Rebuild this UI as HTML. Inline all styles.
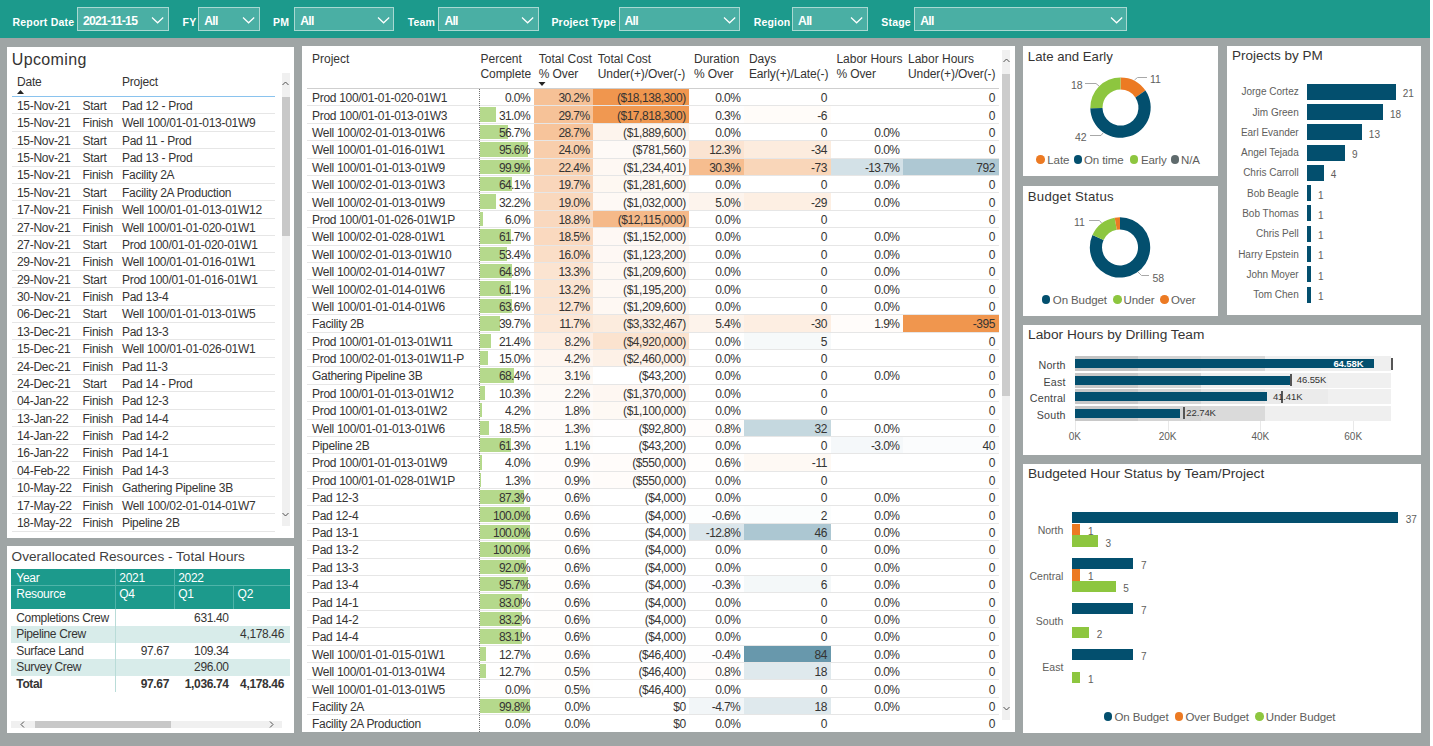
<!DOCTYPE html>
<html><head><meta charset="utf-8"><style>
html,body{margin:0;padding:0;width:1433px;height:746px;overflow:hidden;background:#ffffff;font-family:"Liberation Sans", sans-serif;}
</style></head><body><div style="position:relative;width:1433px;height:746px;overflow:hidden">
<div style="position:absolute;left:0.00px;top:0.00px;width:1430.00px;height:746.00px;background:#9fa5a5"></div>
<div style="position:absolute;left:0.00px;top:0.00px;width:1429.50px;height:38.00px;background:#1c9a8c"></div>
<div style="position:absolute;top:15.50px;font-size:10.5px;line-height:12.0645px;color:#ffffff;font-weight:bold;white-space:nowrap;letter-spacing:0.2px;left:12.50px;">Report Date</div>
<div style="position:absolute;left:77.00px;top:7.40px;width:92.00px;height:23.60px;box-sizing:border-box;border:1.6px solid #a9d9d2;background:#4aafa4"></div>
<div style="position:absolute;top:13.86px;font-size:12.2px;line-height:14.0178px;color:#ffffff;font-weight:bold;white-space:nowrap;letter-spacing:-0.75px;left:83.00px;">2021-11-15</div>
<svg style="position:absolute;left:151.20px;top:16px" width="14" height="9"><polyline points="1,1.5 6.6,6.8 12.2,1.5" fill="none" stroke="#ffffff" stroke-width="1.2"/></svg>
<div style="position:absolute;top:15.50px;font-size:10.5px;line-height:12.0645px;color:#ffffff;font-weight:bold;white-space:nowrap;letter-spacing:0.2px;left:182.60px;">FY</div>
<div style="position:absolute;left:198.20px;top:7.40px;width:61.40px;height:23.60px;box-sizing:border-box;border:1.6px solid #a9d9d2;background:#4aafa4"></div>
<div style="position:absolute;top:13.86px;font-size:12.2px;line-height:14.0178px;color:#ffffff;font-weight:bold;white-space:nowrap;letter-spacing:-0.75px;left:204.20px;">All</div>
<svg style="position:absolute;left:241.80px;top:16px" width="14" height="9"><polyline points="1,1.5 6.6,6.8 12.2,1.5" fill="none" stroke="#ffffff" stroke-width="1.2"/></svg>
<div style="position:absolute;top:15.50px;font-size:10.5px;line-height:12.0645px;color:#ffffff;font-weight:bold;white-space:nowrap;letter-spacing:0.2px;left:273.00px;">PM</div>
<div style="position:absolute;left:294.30px;top:7.40px;width:100.00px;height:23.60px;box-sizing:border-box;border:1.6px solid #a9d9d2;background:#4aafa4"></div>
<div style="position:absolute;top:13.86px;font-size:12.2px;line-height:14.0178px;color:#ffffff;font-weight:bold;white-space:nowrap;letter-spacing:-0.75px;left:300.30px;">All</div>
<svg style="position:absolute;left:376.50px;top:16px" width="14" height="9"><polyline points="1,1.5 6.6,6.8 12.2,1.5" fill="none" stroke="#ffffff" stroke-width="1.2"/></svg>
<div style="position:absolute;top:15.50px;font-size:10.5px;line-height:12.0645px;color:#ffffff;font-weight:bold;white-space:nowrap;letter-spacing:0.2px;left:407.70px;">Team</div>
<div style="position:absolute;left:438.40px;top:7.40px;width:100.20px;height:23.60px;box-sizing:border-box;border:1.6px solid #a9d9d2;background:#4aafa4"></div>
<div style="position:absolute;top:13.86px;font-size:12.2px;line-height:14.0178px;color:#ffffff;font-weight:bold;white-space:nowrap;letter-spacing:-0.75px;left:444.40px;">All</div>
<svg style="position:absolute;left:520.80px;top:16px" width="14" height="9"><polyline points="1,1.5 6.6,6.8 12.2,1.5" fill="none" stroke="#ffffff" stroke-width="1.2"/></svg>
<div style="position:absolute;top:15.50px;font-size:10.5px;line-height:12.0645px;color:#ffffff;font-weight:bold;white-space:nowrap;letter-spacing:0.2px;left:551.40px;">Project Type</div>
<div style="position:absolute;left:618.50px;top:7.40px;width:121.80px;height:23.60px;box-sizing:border-box;border:1.6px solid #a9d9d2;background:#4aafa4"></div>
<div style="position:absolute;top:13.86px;font-size:12.2px;line-height:14.0178px;color:#ffffff;font-weight:bold;white-space:nowrap;letter-spacing:-0.75px;left:624.50px;">All</div>
<svg style="position:absolute;left:722.50px;top:16px" width="14" height="9"><polyline points="1,1.5 6.6,6.8 12.2,1.5" fill="none" stroke="#ffffff" stroke-width="1.2"/></svg>
<div style="position:absolute;top:15.50px;font-size:10.5px;line-height:12.0645px;color:#ffffff;font-weight:bold;white-space:nowrap;letter-spacing:0.2px;left:753.70px;">Region</div>
<div style="position:absolute;left:792.10px;top:7.40px;width:75.80px;height:23.60px;box-sizing:border-box;border:1.6px solid #a9d9d2;background:#4aafa4"></div>
<div style="position:absolute;top:13.86px;font-size:12.2px;line-height:14.0178px;color:#ffffff;font-weight:bold;white-space:nowrap;letter-spacing:-0.75px;left:798.10px;">All</div>
<svg style="position:absolute;left:850.10px;top:16px" width="14" height="9"><polyline points="1,1.5 6.6,6.8 12.2,1.5" fill="none" stroke="#ffffff" stroke-width="1.2"/></svg>
<div style="position:absolute;top:15.50px;font-size:10.5px;line-height:12.0645px;color:#ffffff;font-weight:bold;white-space:nowrap;letter-spacing:0.2px;left:881.30px;">Stage</div>
<div style="position:absolute;left:914.30px;top:7.40px;width:213.00px;height:23.60px;box-sizing:border-box;border:1.6px solid #a9d9d2;background:#4aafa4"></div>
<div style="position:absolute;top:13.86px;font-size:12.2px;line-height:14.0178px;color:#ffffff;font-weight:bold;white-space:nowrap;letter-spacing:-0.75px;left:920.30px;">All</div>
<svg style="position:absolute;left:1109.50px;top:16px" width="14" height="9"><polyline points="1,1.5 6.6,6.8 12.2,1.5" fill="none" stroke="#ffffff" stroke-width="1.2"/></svg>
<div style="position:absolute;left:7.00px;top:47.00px;width:287.00px;height:491.00px;background:#ffffff"></div>
<div style="position:absolute;left:6.80px;top:546.00px;width:286.90px;height:186.90px;background:#ffffff"></div>
<div style="position:absolute;left:302.00px;top:46.00px;width:712.50px;height:686.00px;background:#ffffff"></div>
<div style="position:absolute;left:1022.70px;top:46.00px;width:195.10px;height:130.40px;background:#ffffff"></div>
<div style="position:absolute;left:1022.70px;top:186.00px;width:195.10px;height:130.00px;background:#ffffff"></div>
<div style="position:absolute;left:1227.00px;top:46.00px;width:194.00px;height:269.40px;background:#ffffff"></div>
<div style="position:absolute;left:1022.70px;top:325.00px;width:398.30px;height:130.10px;background:#ffffff"></div>
<div style="position:absolute;left:1022.70px;top:464.00px;width:398.30px;height:269.00px;background:#ffffff"></div>
<div style="position:absolute;top:50.52px;font-size:16px;line-height:18.384px;color:#353433;font-weight:normal;white-space:nowrap;letter-spacing:0.35px;left:11.80px;">Upcoming</div>
<div style="position:absolute;top:76.04px;font-size:12px;line-height:13.788px;color:#353433;font-weight:normal;white-space:nowrap;letter-spacing:-0.2px;left:17.00px;">Date</div>
<div style="position:absolute;top:76.04px;font-size:12px;line-height:13.788px;color:#353433;font-weight:normal;white-space:nowrap;letter-spacing:-0.2px;left:122.00px;">Project</div>
<svg style="position:absolute;left:16px;top:89px" width="9" height="6"><polygon points="1,5 4.5,1 8,5" fill="#252423"/></svg>
<div style="position:absolute;left:12.00px;top:96.00px;width:263.00px;height:1.20px;background:#8ac3ee"></div>
<div style="position:absolute;top:99.84px;font-size:12px;line-height:13.788px;color:#353433;font-weight:normal;white-space:nowrap;letter-spacing:-0.3px;left:17.00px;">15-Nov-21</div>
<div style="position:absolute;top:99.84px;font-size:12px;line-height:13.788px;color:#353433;font-weight:normal;white-space:nowrap;letter-spacing:-0.3px;left:82.60px;">Start</div>
<div style="position:absolute;top:99.84px;font-size:12px;line-height:13.788px;color:#353433;font-weight:normal;white-space:nowrap;letter-spacing:-0.28px;left:122.00px;">Pad 12 - Prod</div>
<div style="position:absolute;left:12.00px;top:113.38px;width:263.00px;height:1.00px;background:#e6e6e6"></div>
<div style="position:absolute;top:117.22px;font-size:12px;line-height:13.788px;color:#353433;font-weight:normal;white-space:nowrap;letter-spacing:-0.3px;left:17.00px;">15-Nov-21</div>
<div style="position:absolute;top:117.22px;font-size:12px;line-height:13.788px;color:#353433;font-weight:normal;white-space:nowrap;letter-spacing:-0.3px;left:82.60px;">Finish</div>
<div style="position:absolute;top:117.22px;font-size:12px;line-height:13.788px;color:#353433;font-weight:normal;white-space:nowrap;letter-spacing:-0.28px;left:122.00px;">Well 100/01-01-013-01W9</div>
<div style="position:absolute;left:12.00px;top:130.76px;width:263.00px;height:1.00px;background:#e6e6e6"></div>
<div style="position:absolute;top:134.60px;font-size:12px;line-height:13.788px;color:#353433;font-weight:normal;white-space:nowrap;letter-spacing:-0.3px;left:17.00px;">15-Nov-21</div>
<div style="position:absolute;top:134.60px;font-size:12px;line-height:13.788px;color:#353433;font-weight:normal;white-space:nowrap;letter-spacing:-0.3px;left:82.60px;">Start</div>
<div style="position:absolute;top:134.60px;font-size:12px;line-height:13.788px;color:#353433;font-weight:normal;white-space:nowrap;letter-spacing:-0.28px;left:122.00px;">Pad 11 - Prod</div>
<div style="position:absolute;left:12.00px;top:148.14px;width:263.00px;height:1.00px;background:#e6e6e6"></div>
<div style="position:absolute;top:151.98px;font-size:12px;line-height:13.788px;color:#353433;font-weight:normal;white-space:nowrap;letter-spacing:-0.3px;left:17.00px;">15-Nov-21</div>
<div style="position:absolute;top:151.98px;font-size:12px;line-height:13.788px;color:#353433;font-weight:normal;white-space:nowrap;letter-spacing:-0.3px;left:82.60px;">Start</div>
<div style="position:absolute;top:151.98px;font-size:12px;line-height:13.788px;color:#353433;font-weight:normal;white-space:nowrap;letter-spacing:-0.28px;left:122.00px;">Pad 13 - Prod</div>
<div style="position:absolute;left:12.00px;top:165.52px;width:263.00px;height:1.00px;background:#e6e6e6"></div>
<div style="position:absolute;top:169.36px;font-size:12px;line-height:13.788px;color:#353433;font-weight:normal;white-space:nowrap;letter-spacing:-0.3px;left:17.00px;">15-Nov-21</div>
<div style="position:absolute;top:169.36px;font-size:12px;line-height:13.788px;color:#353433;font-weight:normal;white-space:nowrap;letter-spacing:-0.3px;left:82.60px;">Finish</div>
<div style="position:absolute;top:169.36px;font-size:12px;line-height:13.788px;color:#353433;font-weight:normal;white-space:nowrap;letter-spacing:-0.28px;left:122.00px;">Facility 2A</div>
<div style="position:absolute;left:12.00px;top:182.90px;width:263.00px;height:1.00px;background:#e6e6e6"></div>
<div style="position:absolute;top:186.74px;font-size:12px;line-height:13.788px;color:#353433;font-weight:normal;white-space:nowrap;letter-spacing:-0.3px;left:17.00px;">15-Nov-21</div>
<div style="position:absolute;top:186.74px;font-size:12px;line-height:13.788px;color:#353433;font-weight:normal;white-space:nowrap;letter-spacing:-0.3px;left:82.60px;">Start</div>
<div style="position:absolute;top:186.74px;font-size:12px;line-height:13.788px;color:#353433;font-weight:normal;white-space:nowrap;letter-spacing:-0.28px;left:122.00px;">Facility 2A Production</div>
<div style="position:absolute;left:12.00px;top:200.28px;width:263.00px;height:1.00px;background:#e6e6e6"></div>
<div style="position:absolute;top:204.12px;font-size:12px;line-height:13.788px;color:#353433;font-weight:normal;white-space:nowrap;letter-spacing:-0.3px;left:17.00px;">17-Nov-21</div>
<div style="position:absolute;top:204.12px;font-size:12px;line-height:13.788px;color:#353433;font-weight:normal;white-space:nowrap;letter-spacing:-0.3px;left:82.60px;">Finish</div>
<div style="position:absolute;top:204.12px;font-size:12px;line-height:13.788px;color:#353433;font-weight:normal;white-space:nowrap;letter-spacing:-0.28px;left:122.00px;">Well 100/01-01-013-01W12</div>
<div style="position:absolute;left:12.00px;top:217.66px;width:263.00px;height:1.00px;background:#e6e6e6"></div>
<div style="position:absolute;top:221.50px;font-size:12px;line-height:13.788px;color:#353433;font-weight:normal;white-space:nowrap;letter-spacing:-0.3px;left:17.00px;">27-Nov-21</div>
<div style="position:absolute;top:221.50px;font-size:12px;line-height:13.788px;color:#353433;font-weight:normal;white-space:nowrap;letter-spacing:-0.3px;left:82.60px;">Finish</div>
<div style="position:absolute;top:221.50px;font-size:12px;line-height:13.788px;color:#353433;font-weight:normal;white-space:nowrap;letter-spacing:-0.28px;left:122.00px;">Well 100/01-01-020-01W1</div>
<div style="position:absolute;left:12.00px;top:235.04px;width:263.00px;height:1.00px;background:#e6e6e6"></div>
<div style="position:absolute;top:238.88px;font-size:12px;line-height:13.788px;color:#353433;font-weight:normal;white-space:nowrap;letter-spacing:-0.3px;left:17.00px;">27-Nov-21</div>
<div style="position:absolute;top:238.88px;font-size:12px;line-height:13.788px;color:#353433;font-weight:normal;white-space:nowrap;letter-spacing:-0.3px;left:82.60px;">Start</div>
<div style="position:absolute;top:238.88px;font-size:12px;line-height:13.788px;color:#353433;font-weight:normal;white-space:nowrap;letter-spacing:-0.28px;left:122.00px;">Prod 100/01-01-020-01W1</div>
<div style="position:absolute;left:12.00px;top:252.42px;width:263.00px;height:1.00px;background:#e6e6e6"></div>
<div style="position:absolute;top:256.26px;font-size:12px;line-height:13.788px;color:#353433;font-weight:normal;white-space:nowrap;letter-spacing:-0.3px;left:17.00px;">29-Nov-21</div>
<div style="position:absolute;top:256.26px;font-size:12px;line-height:13.788px;color:#353433;font-weight:normal;white-space:nowrap;letter-spacing:-0.3px;left:82.60px;">Finish</div>
<div style="position:absolute;top:256.26px;font-size:12px;line-height:13.788px;color:#353433;font-weight:normal;white-space:nowrap;letter-spacing:-0.28px;left:122.00px;">Well 100/01-01-016-01W1</div>
<div style="position:absolute;left:12.00px;top:269.80px;width:263.00px;height:1.00px;background:#e6e6e6"></div>
<div style="position:absolute;top:273.64px;font-size:12px;line-height:13.788px;color:#353433;font-weight:normal;white-space:nowrap;letter-spacing:-0.3px;left:17.00px;">29-Nov-21</div>
<div style="position:absolute;top:273.64px;font-size:12px;line-height:13.788px;color:#353433;font-weight:normal;white-space:nowrap;letter-spacing:-0.3px;left:82.60px;">Start</div>
<div style="position:absolute;top:273.64px;font-size:12px;line-height:13.788px;color:#353433;font-weight:normal;white-space:nowrap;letter-spacing:-0.28px;left:122.00px;">Prod 100/01-01-016-01W1</div>
<div style="position:absolute;left:12.00px;top:287.18px;width:263.00px;height:1.00px;background:#e6e6e6"></div>
<div style="position:absolute;top:291.02px;font-size:12px;line-height:13.788px;color:#353433;font-weight:normal;white-space:nowrap;letter-spacing:-0.3px;left:17.00px;">30-Nov-21</div>
<div style="position:absolute;top:291.02px;font-size:12px;line-height:13.788px;color:#353433;font-weight:normal;white-space:nowrap;letter-spacing:-0.3px;left:82.60px;">Finish</div>
<div style="position:absolute;top:291.02px;font-size:12px;line-height:13.788px;color:#353433;font-weight:normal;white-space:nowrap;letter-spacing:-0.28px;left:122.00px;">Pad 13-4</div>
<div style="position:absolute;left:12.00px;top:304.56px;width:263.00px;height:1.00px;background:#e6e6e6"></div>
<div style="position:absolute;top:308.40px;font-size:12px;line-height:13.788px;color:#353433;font-weight:normal;white-space:nowrap;letter-spacing:-0.3px;left:17.00px;">06-Dec-21</div>
<div style="position:absolute;top:308.40px;font-size:12px;line-height:13.788px;color:#353433;font-weight:normal;white-space:nowrap;letter-spacing:-0.3px;left:82.60px;">Start</div>
<div style="position:absolute;top:308.40px;font-size:12px;line-height:13.788px;color:#353433;font-weight:normal;white-space:nowrap;letter-spacing:-0.28px;left:122.00px;">Well 100/01-01-013-01W5</div>
<div style="position:absolute;left:12.00px;top:321.94px;width:263.00px;height:1.00px;background:#e6e6e6"></div>
<div style="position:absolute;top:325.78px;font-size:12px;line-height:13.788px;color:#353433;font-weight:normal;white-space:nowrap;letter-spacing:-0.3px;left:17.00px;">13-Dec-21</div>
<div style="position:absolute;top:325.78px;font-size:12px;line-height:13.788px;color:#353433;font-weight:normal;white-space:nowrap;letter-spacing:-0.3px;left:82.60px;">Finish</div>
<div style="position:absolute;top:325.78px;font-size:12px;line-height:13.788px;color:#353433;font-weight:normal;white-space:nowrap;letter-spacing:-0.28px;left:122.00px;">Pad 13-3</div>
<div style="position:absolute;left:12.00px;top:339.32px;width:263.00px;height:1.00px;background:#e6e6e6"></div>
<div style="position:absolute;top:343.16px;font-size:12px;line-height:13.788px;color:#353433;font-weight:normal;white-space:nowrap;letter-spacing:-0.3px;left:17.00px;">15-Dec-21</div>
<div style="position:absolute;top:343.16px;font-size:12px;line-height:13.788px;color:#353433;font-weight:normal;white-space:nowrap;letter-spacing:-0.3px;left:82.60px;">Finish</div>
<div style="position:absolute;top:343.16px;font-size:12px;line-height:13.788px;color:#353433;font-weight:normal;white-space:nowrap;letter-spacing:-0.28px;left:122.00px;">Well 100/01-01-026-01W1</div>
<div style="position:absolute;left:12.00px;top:356.70px;width:263.00px;height:1.00px;background:#e6e6e6"></div>
<div style="position:absolute;top:360.54px;font-size:12px;line-height:13.788px;color:#353433;font-weight:normal;white-space:nowrap;letter-spacing:-0.3px;left:17.00px;">24-Dec-21</div>
<div style="position:absolute;top:360.54px;font-size:12px;line-height:13.788px;color:#353433;font-weight:normal;white-space:nowrap;letter-spacing:-0.3px;left:82.60px;">Finish</div>
<div style="position:absolute;top:360.54px;font-size:12px;line-height:13.788px;color:#353433;font-weight:normal;white-space:nowrap;letter-spacing:-0.28px;left:122.00px;">Pad 11-3</div>
<div style="position:absolute;left:12.00px;top:374.08px;width:263.00px;height:1.00px;background:#e6e6e6"></div>
<div style="position:absolute;top:377.92px;font-size:12px;line-height:13.788px;color:#353433;font-weight:normal;white-space:nowrap;letter-spacing:-0.3px;left:17.00px;">24-Dec-21</div>
<div style="position:absolute;top:377.92px;font-size:12px;line-height:13.788px;color:#353433;font-weight:normal;white-space:nowrap;letter-spacing:-0.3px;left:82.60px;">Start</div>
<div style="position:absolute;top:377.92px;font-size:12px;line-height:13.788px;color:#353433;font-weight:normal;white-space:nowrap;letter-spacing:-0.28px;left:122.00px;">Pad 14 - Prod</div>
<div style="position:absolute;left:12.00px;top:391.46px;width:263.00px;height:1.00px;background:#e6e6e6"></div>
<div style="position:absolute;top:395.30px;font-size:12px;line-height:13.788px;color:#353433;font-weight:normal;white-space:nowrap;letter-spacing:-0.3px;left:17.00px;">04-Jan-22</div>
<div style="position:absolute;top:395.30px;font-size:12px;line-height:13.788px;color:#353433;font-weight:normal;white-space:nowrap;letter-spacing:-0.3px;left:82.60px;">Finish</div>
<div style="position:absolute;top:395.30px;font-size:12px;line-height:13.788px;color:#353433;font-weight:normal;white-space:nowrap;letter-spacing:-0.28px;left:122.00px;">Pad 12-3</div>
<div style="position:absolute;left:12.00px;top:408.84px;width:263.00px;height:1.00px;background:#e6e6e6"></div>
<div style="position:absolute;top:412.68px;font-size:12px;line-height:13.788px;color:#353433;font-weight:normal;white-space:nowrap;letter-spacing:-0.3px;left:17.00px;">13-Jan-22</div>
<div style="position:absolute;top:412.68px;font-size:12px;line-height:13.788px;color:#353433;font-weight:normal;white-space:nowrap;letter-spacing:-0.3px;left:82.60px;">Finish</div>
<div style="position:absolute;top:412.68px;font-size:12px;line-height:13.788px;color:#353433;font-weight:normal;white-space:nowrap;letter-spacing:-0.28px;left:122.00px;">Pad 14-4</div>
<div style="position:absolute;left:12.00px;top:426.22px;width:263.00px;height:1.00px;background:#e6e6e6"></div>
<div style="position:absolute;top:430.06px;font-size:12px;line-height:13.788px;color:#353433;font-weight:normal;white-space:nowrap;letter-spacing:-0.3px;left:17.00px;">14-Jan-22</div>
<div style="position:absolute;top:430.06px;font-size:12px;line-height:13.788px;color:#353433;font-weight:normal;white-space:nowrap;letter-spacing:-0.3px;left:82.60px;">Finish</div>
<div style="position:absolute;top:430.06px;font-size:12px;line-height:13.788px;color:#353433;font-weight:normal;white-space:nowrap;letter-spacing:-0.28px;left:122.00px;">Pad 14-2</div>
<div style="position:absolute;left:12.00px;top:443.60px;width:263.00px;height:1.00px;background:#e6e6e6"></div>
<div style="position:absolute;top:447.44px;font-size:12px;line-height:13.788px;color:#353433;font-weight:normal;white-space:nowrap;letter-spacing:-0.3px;left:17.00px;">16-Jan-22</div>
<div style="position:absolute;top:447.44px;font-size:12px;line-height:13.788px;color:#353433;font-weight:normal;white-space:nowrap;letter-spacing:-0.3px;left:82.60px;">Finish</div>
<div style="position:absolute;top:447.44px;font-size:12px;line-height:13.788px;color:#353433;font-weight:normal;white-space:nowrap;letter-spacing:-0.28px;left:122.00px;">Pad 14-1</div>
<div style="position:absolute;left:12.00px;top:460.98px;width:263.00px;height:1.00px;background:#e6e6e6"></div>
<div style="position:absolute;top:464.82px;font-size:12px;line-height:13.788px;color:#353433;font-weight:normal;white-space:nowrap;letter-spacing:-0.3px;left:17.00px;">04-Feb-22</div>
<div style="position:absolute;top:464.82px;font-size:12px;line-height:13.788px;color:#353433;font-weight:normal;white-space:nowrap;letter-spacing:-0.3px;left:82.60px;">Finish</div>
<div style="position:absolute;top:464.82px;font-size:12px;line-height:13.788px;color:#353433;font-weight:normal;white-space:nowrap;letter-spacing:-0.28px;left:122.00px;">Pad 14-3</div>
<div style="position:absolute;left:12.00px;top:478.36px;width:263.00px;height:1.00px;background:#e6e6e6"></div>
<div style="position:absolute;top:482.20px;font-size:12px;line-height:13.788px;color:#353433;font-weight:normal;white-space:nowrap;letter-spacing:-0.3px;left:17.00px;">10-May-22</div>
<div style="position:absolute;top:482.20px;font-size:12px;line-height:13.788px;color:#353433;font-weight:normal;white-space:nowrap;letter-spacing:-0.3px;left:82.60px;">Finish</div>
<div style="position:absolute;top:482.20px;font-size:12px;line-height:13.788px;color:#353433;font-weight:normal;white-space:nowrap;letter-spacing:-0.28px;left:122.00px;">Gathering Pipeline 3B</div>
<div style="position:absolute;left:12.00px;top:495.74px;width:263.00px;height:1.00px;background:#e6e6e6"></div>
<div style="position:absolute;top:499.58px;font-size:12px;line-height:13.788px;color:#353433;font-weight:normal;white-space:nowrap;letter-spacing:-0.3px;left:17.00px;">17-May-22</div>
<div style="position:absolute;top:499.58px;font-size:12px;line-height:13.788px;color:#353433;font-weight:normal;white-space:nowrap;letter-spacing:-0.3px;left:82.60px;">Finish</div>
<div style="position:absolute;top:499.58px;font-size:12px;line-height:13.788px;color:#353433;font-weight:normal;white-space:nowrap;letter-spacing:-0.28px;left:122.00px;">Well 100/02-01-014-01W7</div>
<div style="position:absolute;left:12.00px;top:513.12px;width:263.00px;height:1.00px;background:#e6e6e6"></div>
<div style="position:absolute;top:516.96px;font-size:12px;line-height:13.788px;color:#353433;font-weight:normal;white-space:nowrap;letter-spacing:-0.3px;left:17.00px;">18-May-22</div>
<div style="position:absolute;top:516.96px;font-size:12px;line-height:13.788px;color:#353433;font-weight:normal;white-space:nowrap;letter-spacing:-0.3px;left:82.60px;">Finish</div>
<div style="position:absolute;top:516.96px;font-size:12px;line-height:13.788px;color:#353433;font-weight:normal;white-space:nowrap;letter-spacing:-0.28px;left:122.00px;">Pipeline 2B</div>
<div style="position:absolute;left:12.00px;top:530.50px;width:263.00px;height:1.00px;background:#e6e6e6"></div>
<div style="position:absolute;left:281.60px;top:73.00px;width:8.00px;height:453.00px;background:#f0f0f0"></div>
<div style="position:absolute;left:281.60px;top:97.00px;width:8.00px;height:139.00px;background:#c8c8c8"></div>
<svg style="position:absolute;left:281px;top:80px" width="9" height="7"><polyline points="1.5,5 4.5,2 7.5,5" fill="none" stroke="#505050" stroke-width="1"/></svg>
<svg style="position:absolute;left:281px;top:511px" width="9" height="7"><polyline points="1.5,2 4.5,5 7.5,2" fill="none" stroke="#505050" stroke-width="1"/></svg>
<div style="position:absolute;top:548.69px;font-size:13.6px;line-height:15.6264px;color:#404040;font-weight:normal;white-space:nowrap;left:11.60px;">Overallocated Resources - Total Hours</div>
<div style="position:absolute;left:11.00px;top:568.50px;width:278.50px;height:40.00px;background:#1c9a8c"></div>
<div style="position:absolute;left:11.00px;top:585.20px;width:278.50px;height:1.00px;background:#4fb4a9"></div>
<div style="position:absolute;left:114.60px;top:568.50px;width:1.00px;height:40.00px;background:#4fb4a9"></div>
<div style="position:absolute;left:173.50px;top:568.50px;width:1.00px;height:40.00px;background:#4fb4a9"></div>
<div style="position:absolute;left:232.50px;top:585.50px;width:1.00px;height:23.00px;background:#4fb4a9"></div>
<div style="position:absolute;top:572.14px;font-size:12px;line-height:13.788px;color:#ffffff;font-weight:normal;white-space:nowrap;letter-spacing:-0.3px;left:16.30px;">Year</div>
<div style="position:absolute;top:572.14px;font-size:12px;line-height:13.788px;color:#ffffff;font-weight:normal;white-space:nowrap;letter-spacing:-0.3px;left:119.30px;">2021</div>
<div style="position:absolute;top:572.14px;font-size:12px;line-height:13.788px;color:#ffffff;font-weight:normal;white-space:nowrap;letter-spacing:-0.3px;left:178.20px;">2022</div>
<div style="position:absolute;top:588.24px;font-size:12px;line-height:13.788px;color:#ffffff;font-weight:normal;white-space:nowrap;letter-spacing:-0.3px;left:16.30px;">Resource</div>
<div style="position:absolute;top:588.24px;font-size:12px;line-height:13.788px;color:#ffffff;font-weight:normal;white-space:nowrap;letter-spacing:-0.3px;left:119.30px;">Q4</div>
<div style="position:absolute;top:588.24px;font-size:12px;line-height:13.788px;color:#ffffff;font-weight:normal;white-space:nowrap;letter-spacing:-0.3px;left:178.20px;">Q1</div>
<div style="position:absolute;top:588.24px;font-size:12px;line-height:13.788px;color:#ffffff;font-weight:normal;white-space:nowrap;letter-spacing:-0.3px;left:237.60px;">Q2</div>
<div style="position:absolute;top:611.64px;font-size:12px;line-height:13.788px;color:#353433;font-weight:normal;white-space:nowrap;letter-spacing:-0.35px;left:16.30px;">Completions Crew</div>
<div style="position:absolute;top:611.64px;font-size:12px;line-height:13.788px;color:#353433;font-weight:normal;white-space:nowrap;letter-spacing:-0.35px;right:1204.30px;text-align:right;">631.40</div>
<div style="position:absolute;left:11.00px;top:626.00px;width:278.50px;height:16.50px;background:#d8ecea"></div>
<div style="position:absolute;top:628.14px;font-size:12px;line-height:13.788px;color:#353433;font-weight:normal;white-space:nowrap;letter-spacing:-0.35px;left:16.30px;">Pipeline Crew</div>
<div style="position:absolute;top:628.14px;font-size:12px;line-height:13.788px;color:#353433;font-weight:normal;white-space:nowrap;letter-spacing:-0.35px;right:1149.00px;text-align:right;">4,178.46</div>
<div style="position:absolute;top:644.64px;font-size:12px;line-height:13.788px;color:#353433;font-weight:normal;white-space:nowrap;letter-spacing:-0.35px;left:16.30px;">Surface Land</div>
<div style="position:absolute;top:644.64px;font-size:12px;line-height:13.788px;color:#353433;font-weight:normal;white-space:nowrap;letter-spacing:-0.35px;right:1264.00px;text-align:right;">97.67</div>
<div style="position:absolute;top:644.64px;font-size:12px;line-height:13.788px;color:#353433;font-weight:normal;white-space:nowrap;letter-spacing:-0.35px;right:1204.30px;text-align:right;">109.34</div>
<div style="position:absolute;left:11.00px;top:659.00px;width:278.50px;height:16.50px;background:#d8ecea"></div>
<div style="position:absolute;top:661.14px;font-size:12px;line-height:13.788px;color:#353433;font-weight:normal;white-space:nowrap;letter-spacing:-0.35px;left:16.30px;">Survey Crew</div>
<div style="position:absolute;top:661.14px;font-size:12px;line-height:13.788px;color:#353433;font-weight:normal;white-space:nowrap;letter-spacing:-0.35px;right:1204.30px;text-align:right;">296.00</div>
<div style="position:absolute;top:677.64px;font-size:12px;line-height:13.788px;color:#353433;font-weight:bold;white-space:nowrap;letter-spacing:-0.35px;left:16.30px;">Total</div>
<div style="position:absolute;top:677.64px;font-size:12px;line-height:13.788px;color:#353433;font-weight:bold;white-space:nowrap;letter-spacing:-0.35px;right:1264.00px;text-align:right;">97.67</div>
<div style="position:absolute;top:677.64px;font-size:12px;line-height:13.788px;color:#353433;font-weight:bold;white-space:nowrap;letter-spacing:-0.35px;right:1204.30px;text-align:right;">1,036.74</div>
<div style="position:absolute;top:677.64px;font-size:12px;line-height:13.788px;color:#353433;font-weight:bold;white-space:nowrap;letter-spacing:-0.35px;right:1149.00px;text-align:right;">4,178.46</div>
<div style="position:absolute;left:114.60px;top:608.50px;width:1.00px;height:83.50px;background:#b9dcd8"></div>
<div style="position:absolute;left:11.20px;top:720.70px;width:270.60px;height:7.70px;background:#f0f0f0"></div>
<div style="position:absolute;left:34.60px;top:720.70px;width:136.70px;height:7.70px;background:#c8c8c8"></div>
<svg style="position:absolute;left:19px;top:720px" width="7" height="9"><polyline points="5,1.5 2,4.5 5,7.5" fill="none" stroke="#505050" stroke-width="1"/></svg>
<svg style="position:absolute;left:268px;top:720px" width="7" height="9"><polyline points="2,1.5 5,4.5 2,7.5" fill="none" stroke="#505050" stroke-width="1"/></svg>
<div style="position:absolute;top:52.94px;font-size:12px;line-height:13.788px;color:#353433;font-weight:normal;white-space:nowrap;left:312.00px;">Project</div>
<div style="position:absolute;top:52.94px;font-size:12px;line-height:13.788px;color:#353433;font-weight:normal;white-space:nowrap;left:480.50px;">Percent</div>
<div style="position:absolute;top:68.44px;font-size:12px;line-height:13.788px;color:#353433;font-weight:normal;white-space:nowrap;letter-spacing:-0.1px;left:480.50px;">Complete</div>
<div style="position:absolute;top:52.94px;font-size:12px;line-height:13.788px;color:#353433;font-weight:normal;white-space:nowrap;left:538.80px;">Total Cost</div>
<div style="position:absolute;top:68.44px;font-size:12px;line-height:13.788px;color:#353433;font-weight:normal;white-space:nowrap;letter-spacing:-0.1px;left:538.80px;">% Over</div>
<div style="position:absolute;top:52.94px;font-size:12px;line-height:13.788px;color:#353433;font-weight:normal;white-space:nowrap;left:597.80px;">Total Cost</div>
<div style="position:absolute;top:68.44px;font-size:12px;line-height:13.788px;color:#353433;font-weight:normal;white-space:nowrap;letter-spacing:-0.1px;left:597.80px;">Under(+)/Over(-)</div>
<div style="position:absolute;top:52.94px;font-size:12px;line-height:13.788px;color:#353433;font-weight:normal;white-space:nowrap;left:694.00px;">Duration</div>
<div style="position:absolute;top:68.44px;font-size:12px;line-height:13.788px;color:#353433;font-weight:normal;white-space:nowrap;letter-spacing:-0.1px;left:694.00px;">% Over</div>
<div style="position:absolute;top:52.94px;font-size:12px;line-height:13.788px;color:#353433;font-weight:normal;white-space:nowrap;left:748.90px;">Days</div>
<div style="position:absolute;top:68.44px;font-size:12px;line-height:13.788px;color:#353433;font-weight:normal;white-space:nowrap;letter-spacing:-0.1px;left:748.90px;">Early(+)/Late(-)</div>
<div style="position:absolute;top:52.94px;font-size:12px;line-height:13.788px;color:#353433;font-weight:normal;white-space:nowrap;left:836.40px;">Labor Hours</div>
<div style="position:absolute;top:68.44px;font-size:12px;line-height:13.788px;color:#353433;font-weight:normal;white-space:nowrap;letter-spacing:-0.1px;left:836.40px;">% Over</div>
<div style="position:absolute;top:52.94px;font-size:12px;line-height:13.788px;color:#353433;font-weight:normal;white-space:nowrap;left:908.00px;">Labor Hours</div>
<div style="position:absolute;top:68.44px;font-size:12px;line-height:13.788px;color:#353433;font-weight:normal;white-space:nowrap;letter-spacing:-0.1px;left:908.00px;">Under(+)/Over(-)</div>
<svg style="position:absolute;left:537px;top:81px" width="10" height="6"><polygon points="1.5,1 8.5,1 5,5" fill="#252423"/></svg>
<div style="position:absolute;left:307.00px;top:88.30px;width:691.70px;height:1.20px;background:#cfcfcf"></div>
<div style="position:absolute;left:302px;top:46px;width:712.5px;height:686px;overflow:hidden">
<div style="position:absolute;left:232.00px;top:42.60px;width:59.00px;height:17.39px;background:#f6c196"></div>
<div style="position:absolute;left:291.00px;top:42.60px;width:96.00px;height:17.39px;background:#f0964e"></div>
<div style="position:absolute;top:46.24px;font-size:12px;line-height:13.788px;color:#353433;white-space:nowrap;letter-spacing:-0.3px;left:10.00px;">Prod 100/01-01-020-01W1</div>
<div style="position:absolute;top:46.24px;font-size:12px;line-height:13.788px;color:#353433;white-space:nowrap;letter-spacing:-0.6px;right:484.50px;text-align:right;">0.0%</div>
<div style="position:absolute;top:46.24px;font-size:12px;line-height:13.788px;color:#353433;white-space:nowrap;letter-spacing:-0.6px;right:425.00px;text-align:right;">30.2%</div>
<div style="position:absolute;top:46.24px;font-size:12px;line-height:13.788px;color:#353433;white-space:nowrap;letter-spacing:-0.45px;right:328.75px;text-align:right;">($18,138,300)</div>
<div style="position:absolute;top:46.24px;font-size:12px;line-height:13.788px;color:#353433;white-space:nowrap;letter-spacing:-0.6px;right:274.30px;text-align:right;">0.0%</div>
<div style="position:absolute;top:46.24px;font-size:12px;line-height:13.788px;color:#353433;white-space:nowrap;letter-spacing:-0.45px;right:187.55px;text-align:right;">0</div>
<div style="position:absolute;top:46.24px;font-size:12px;line-height:13.788px;color:#353433;white-space:nowrap;letter-spacing:-0.45px;right:19.55px;text-align:right;">0</div>
<div style="position:absolute;left:232.00px;top:59.99px;width:59.00px;height:17.39px;background:#f6c298"></div>
<div style="position:absolute;left:291.00px;top:59.99px;width:96.00px;height:17.39px;background:#f09851"></div>
<div style="position:absolute;left:387.00px;top:59.99px;width:55.30px;height:17.39px;background:#fffefe"></div>
<div style="position:absolute;left:442.30px;top:59.99px;width:86.70px;height:17.39px;background:#fffcf9"></div>
<div style="position:absolute;left:178.00px;top:61.49px;width:15.50px;height:14.39px;background:#b5d98c"></div>
<div style="position:absolute;top:63.63px;font-size:12px;line-height:13.788px;color:#353433;white-space:nowrap;letter-spacing:-0.3px;left:10.00px;">Prod 100/01-01-013-01W3</div>
<div style="position:absolute;top:63.63px;font-size:12px;line-height:13.788px;color:#353433;white-space:nowrap;letter-spacing:-0.6px;right:484.50px;text-align:right;">31.0%</div>
<div style="position:absolute;top:63.63px;font-size:12px;line-height:13.788px;color:#353433;white-space:nowrap;letter-spacing:-0.6px;right:425.00px;text-align:right;">29.7%</div>
<div style="position:absolute;top:63.63px;font-size:12px;line-height:13.788px;color:#353433;white-space:nowrap;letter-spacing:-0.45px;right:328.75px;text-align:right;">($17,818,300)</div>
<div style="position:absolute;top:63.63px;font-size:12px;line-height:13.788px;color:#353433;white-space:nowrap;letter-spacing:-0.6px;right:274.30px;text-align:right;">0.3%</div>
<div style="position:absolute;top:63.63px;font-size:12px;line-height:13.788px;color:#353433;white-space:nowrap;letter-spacing:-0.45px;right:187.55px;text-align:right;">-6</div>
<div style="position:absolute;top:63.63px;font-size:12px;line-height:13.788px;color:#353433;white-space:nowrap;letter-spacing:-0.45px;right:19.55px;text-align:right;">0</div>
<div style="position:absolute;left:232.00px;top:77.38px;width:59.00px;height:17.39px;background:#f7c49b"></div>
<div style="position:absolute;left:291.00px;top:77.38px;width:96.00px;height:17.39px;background:#fdf4ed"></div>
<div style="position:absolute;left:178.00px;top:78.88px;width:28.35px;height:14.39px;background:#b5d98c"></div>
<div style="position:absolute;top:81.02px;font-size:12px;line-height:13.788px;color:#353433;white-space:nowrap;letter-spacing:-0.3px;left:10.00px;">Well 100/02-01-013-01W6</div>
<div style="position:absolute;top:81.02px;font-size:12px;line-height:13.788px;color:#353433;white-space:nowrap;letter-spacing:-0.6px;right:484.50px;text-align:right;">56.7%</div>
<div style="position:absolute;top:81.02px;font-size:12px;line-height:13.788px;color:#353433;white-space:nowrap;letter-spacing:-0.6px;right:425.00px;text-align:right;">28.7%</div>
<div style="position:absolute;top:81.02px;font-size:12px;line-height:13.788px;color:#353433;white-space:nowrap;letter-spacing:-0.45px;right:328.75px;text-align:right;">($1,889,600)</div>
<div style="position:absolute;top:81.02px;font-size:12px;line-height:13.788px;color:#353433;white-space:nowrap;letter-spacing:-0.6px;right:274.30px;text-align:right;">0.0%</div>
<div style="position:absolute;top:81.02px;font-size:12px;line-height:13.788px;color:#353433;white-space:nowrap;letter-spacing:-0.45px;right:187.55px;text-align:right;">0</div>
<div style="position:absolute;top:81.02px;font-size:12px;line-height:13.788px;color:#353433;white-space:nowrap;letter-spacing:-0.6px;right:115.20px;text-align:right;">0.0%</div>
<div style="position:absolute;top:81.02px;font-size:12px;line-height:13.788px;color:#353433;white-space:nowrap;letter-spacing:-0.45px;right:19.55px;text-align:right;">0</div>
<div style="position:absolute;left:232.00px;top:94.77px;width:59.00px;height:17.39px;background:#f8ceac"></div>
<div style="position:absolute;left:291.00px;top:94.77px;width:96.00px;height:17.39px;background:#fefaf7"></div>
<div style="position:absolute;left:387.00px;top:94.77px;width:55.30px;height:17.39px;background:#fbe4d2"></div>
<div style="position:absolute;left:442.30px;top:94.77px;width:86.70px;height:17.39px;background:#fcecde"></div>
<div style="position:absolute;left:178.00px;top:96.27px;width:47.80px;height:14.39px;background:#b5d98c"></div>
<div style="position:absolute;top:98.41px;font-size:12px;line-height:13.788px;color:#353433;white-space:nowrap;letter-spacing:-0.3px;left:10.00px;">Well 100/01-01-016-01W1</div>
<div style="position:absolute;top:98.41px;font-size:12px;line-height:13.788px;color:#353433;white-space:nowrap;letter-spacing:-0.6px;right:484.50px;text-align:right;">95.6%</div>
<div style="position:absolute;top:98.41px;font-size:12px;line-height:13.788px;color:#353433;white-space:nowrap;letter-spacing:-0.6px;right:425.00px;text-align:right;">24.0%</div>
<div style="position:absolute;top:98.41px;font-size:12px;line-height:13.788px;color:#353433;white-space:nowrap;letter-spacing:-0.45px;right:328.75px;text-align:right;">($781,560)</div>
<div style="position:absolute;top:98.41px;font-size:12px;line-height:13.788px;color:#353433;white-space:nowrap;letter-spacing:-0.6px;right:274.30px;text-align:right;">12.3%</div>
<div style="position:absolute;top:98.41px;font-size:12px;line-height:13.788px;color:#353433;white-space:nowrap;letter-spacing:-0.45px;right:187.55px;text-align:right;">-34</div>
<div style="position:absolute;top:98.41px;font-size:12px;line-height:13.788px;color:#353433;white-space:nowrap;letter-spacing:-0.6px;right:115.20px;text-align:right;">0.0%</div>
<div style="position:absolute;top:98.41px;font-size:12px;line-height:13.788px;color:#353433;white-space:nowrap;letter-spacing:-0.45px;right:19.55px;text-align:right;">0</div>
<div style="position:absolute;left:232.00px;top:112.16px;width:59.00px;height:17.39px;background:#f8d1b1"></div>
<div style="position:absolute;left:291.00px;top:112.16px;width:96.00px;height:17.39px;background:#fef8f3"></div>
<div style="position:absolute;left:387.00px;top:112.16px;width:55.30px;height:17.39px;background:#f6bd8f"></div>
<div style="position:absolute;left:442.30px;top:112.16px;width:86.70px;height:17.39px;background:#f9d6b9"></div>
<div style="position:absolute;left:529.00px;top:112.16px;width:72.00px;height:17.39px;background:#d3e1e7"></div>
<div style="position:absolute;left:601.00px;top:112.16px;width:95.70px;height:17.39px;background:#aec8d3"></div>
<div style="position:absolute;left:178.00px;top:113.66px;width:49.95px;height:14.39px;background:#b5d98c"></div>
<div style="position:absolute;top:115.80px;font-size:12px;line-height:13.788px;color:#353433;white-space:nowrap;letter-spacing:-0.3px;left:10.00px;">Well 100/01-01-013-01W9</div>
<div style="position:absolute;top:115.80px;font-size:12px;line-height:13.788px;color:#353433;white-space:nowrap;letter-spacing:-0.6px;right:484.50px;text-align:right;">99.9%</div>
<div style="position:absolute;top:115.80px;font-size:12px;line-height:13.788px;color:#353433;white-space:nowrap;letter-spacing:-0.6px;right:425.00px;text-align:right;">22.4%</div>
<div style="position:absolute;top:115.80px;font-size:12px;line-height:13.788px;color:#353433;white-space:nowrap;letter-spacing:-0.45px;right:328.75px;text-align:right;">($1,234,401)</div>
<div style="position:absolute;top:115.80px;font-size:12px;line-height:13.788px;color:#353433;white-space:nowrap;letter-spacing:-0.6px;right:274.30px;text-align:right;">30.3%</div>
<div style="position:absolute;top:115.80px;font-size:12px;line-height:13.788px;color:#353433;white-space:nowrap;letter-spacing:-0.45px;right:187.55px;text-align:right;">-73</div>
<div style="position:absolute;top:115.80px;font-size:12px;line-height:13.788px;color:#353433;white-space:nowrap;letter-spacing:-0.6px;right:115.20px;text-align:right;">-13.7%</div>
<div style="position:absolute;top:115.80px;font-size:12px;line-height:13.788px;color:#353433;white-space:nowrap;letter-spacing:-0.45px;right:19.55px;text-align:right;">792</div>
<div style="position:absolute;left:232.00px;top:129.55px;width:59.00px;height:17.39px;background:#f9d6bb"></div>
<div style="position:absolute;left:291.00px;top:129.55px;width:96.00px;height:17.39px;background:#fef8f2"></div>
<div style="position:absolute;left:178.00px;top:131.05px;width:32.05px;height:14.39px;background:#b5d98c"></div>
<div style="position:absolute;top:133.19px;font-size:12px;line-height:13.788px;color:#353433;white-space:nowrap;letter-spacing:-0.3px;left:10.00px;">Well 100/02-01-013-01W3</div>
<div style="position:absolute;top:133.19px;font-size:12px;line-height:13.788px;color:#353433;white-space:nowrap;letter-spacing:-0.6px;right:484.50px;text-align:right;">64.1%</div>
<div style="position:absolute;top:133.19px;font-size:12px;line-height:13.788px;color:#353433;white-space:nowrap;letter-spacing:-0.6px;right:425.00px;text-align:right;">19.7%</div>
<div style="position:absolute;top:133.19px;font-size:12px;line-height:13.788px;color:#353433;white-space:nowrap;letter-spacing:-0.45px;right:328.75px;text-align:right;">($1,281,600)</div>
<div style="position:absolute;top:133.19px;font-size:12px;line-height:13.788px;color:#353433;white-space:nowrap;letter-spacing:-0.6px;right:274.30px;text-align:right;">0.0%</div>
<div style="position:absolute;top:133.19px;font-size:12px;line-height:13.788px;color:#353433;white-space:nowrap;letter-spacing:-0.45px;right:187.55px;text-align:right;">0</div>
<div style="position:absolute;top:133.19px;font-size:12px;line-height:13.788px;color:#353433;white-space:nowrap;letter-spacing:-0.6px;right:115.20px;text-align:right;">0.0%</div>
<div style="position:absolute;top:133.19px;font-size:12px;line-height:13.788px;color:#353433;white-space:nowrap;letter-spacing:-0.45px;right:19.55px;text-align:right;">0</div>
<div style="position:absolute;left:232.00px;top:146.94px;width:59.00px;height:17.39px;background:#f9d8bd"></div>
<div style="position:absolute;left:291.00px;top:146.94px;width:96.00px;height:17.39px;background:#fef9f5"></div>
<div style="position:absolute;left:387.00px;top:146.94px;width:55.30px;height:17.39px;background:#fdf4ed"></div>
<div style="position:absolute;left:442.30px;top:146.94px;width:86.70px;height:17.39px;background:#fdefe3"></div>
<div style="position:absolute;left:178.00px;top:148.44px;width:16.10px;height:14.39px;background:#b5d98c"></div>
<div style="position:absolute;top:150.58px;font-size:12px;line-height:13.788px;color:#353433;white-space:nowrap;letter-spacing:-0.3px;left:10.00px;">Well 100/02-01-013-01W9</div>
<div style="position:absolute;top:150.58px;font-size:12px;line-height:13.788px;color:#353433;white-space:nowrap;letter-spacing:-0.6px;right:484.50px;text-align:right;">32.2%</div>
<div style="position:absolute;top:150.58px;font-size:12px;line-height:13.788px;color:#353433;white-space:nowrap;letter-spacing:-0.6px;right:425.00px;text-align:right;">19.0%</div>
<div style="position:absolute;top:150.58px;font-size:12px;line-height:13.788px;color:#353433;white-space:nowrap;letter-spacing:-0.45px;right:328.75px;text-align:right;">($1,032,000)</div>
<div style="position:absolute;top:150.58px;font-size:12px;line-height:13.788px;color:#353433;white-space:nowrap;letter-spacing:-0.6px;right:274.30px;text-align:right;">5.0%</div>
<div style="position:absolute;top:150.58px;font-size:12px;line-height:13.788px;color:#353433;white-space:nowrap;letter-spacing:-0.45px;right:187.55px;text-align:right;">-29</div>
<div style="position:absolute;top:150.58px;font-size:12px;line-height:13.788px;color:#353433;white-space:nowrap;letter-spacing:-0.6px;right:115.20px;text-align:right;">0.0%</div>
<div style="position:absolute;top:150.58px;font-size:12px;line-height:13.788px;color:#353433;white-space:nowrap;letter-spacing:-0.45px;right:19.55px;text-align:right;">0</div>
<div style="position:absolute;left:232.00px;top:164.33px;width:59.00px;height:17.39px;background:#f9d8be"></div>
<div style="position:absolute;left:291.00px;top:164.33px;width:96.00px;height:17.39px;background:#f5b989"></div>
<div style="position:absolute;left:178.00px;top:165.83px;width:3.00px;height:14.39px;background:#b5d98c"></div>
<div style="position:absolute;top:167.97px;font-size:12px;line-height:13.788px;color:#353433;white-space:nowrap;letter-spacing:-0.3px;left:10.00px;">Prod 100/01-01-026-01W1P</div>
<div style="position:absolute;top:167.97px;font-size:12px;line-height:13.788px;color:#353433;white-space:nowrap;letter-spacing:-0.6px;right:484.50px;text-align:right;">6.0%</div>
<div style="position:absolute;top:167.97px;font-size:12px;line-height:13.788px;color:#353433;white-space:nowrap;letter-spacing:-0.6px;right:425.00px;text-align:right;">18.8%</div>
<div style="position:absolute;top:167.97px;font-size:12px;line-height:13.788px;color:#353433;white-space:nowrap;letter-spacing:-0.45px;right:328.75px;text-align:right;">($12,115,000)</div>
<div style="position:absolute;top:167.97px;font-size:12px;line-height:13.788px;color:#353433;white-space:nowrap;letter-spacing:-0.6px;right:274.30px;text-align:right;">0.0%</div>
<div style="position:absolute;top:167.97px;font-size:12px;line-height:13.788px;color:#353433;white-space:nowrap;letter-spacing:-0.45px;right:187.55px;text-align:right;">0</div>
<div style="position:absolute;top:167.97px;font-size:12px;line-height:13.788px;color:#353433;white-space:nowrap;letter-spacing:-0.45px;right:19.55px;text-align:right;">0</div>
<div style="position:absolute;left:232.00px;top:181.72px;width:59.00px;height:17.39px;background:#fad9bf"></div>
<div style="position:absolute;left:291.00px;top:181.72px;width:96.00px;height:17.39px;background:#fef8f4"></div>
<div style="position:absolute;left:178.00px;top:183.22px;width:30.85px;height:14.39px;background:#b5d98c"></div>
<div style="position:absolute;top:185.36px;font-size:12px;line-height:13.788px;color:#353433;white-space:nowrap;letter-spacing:-0.3px;left:10.00px;">Well 100/02-01-028-01W1</div>
<div style="position:absolute;top:185.36px;font-size:12px;line-height:13.788px;color:#353433;white-space:nowrap;letter-spacing:-0.6px;right:484.50px;text-align:right;">61.7%</div>
<div style="position:absolute;top:185.36px;font-size:12px;line-height:13.788px;color:#353433;white-space:nowrap;letter-spacing:-0.6px;right:425.00px;text-align:right;">18.5%</div>
<div style="position:absolute;top:185.36px;font-size:12px;line-height:13.788px;color:#353433;white-space:nowrap;letter-spacing:-0.45px;right:328.75px;text-align:right;">($1,152,000)</div>
<div style="position:absolute;top:185.36px;font-size:12px;line-height:13.788px;color:#353433;white-space:nowrap;letter-spacing:-0.6px;right:274.30px;text-align:right;">0.0%</div>
<div style="position:absolute;top:185.36px;font-size:12px;line-height:13.788px;color:#353433;white-space:nowrap;letter-spacing:-0.45px;right:187.55px;text-align:right;">0</div>
<div style="position:absolute;top:185.36px;font-size:12px;line-height:13.788px;color:#353433;white-space:nowrap;letter-spacing:-0.6px;right:115.20px;text-align:right;">0.0%</div>
<div style="position:absolute;top:185.36px;font-size:12px;line-height:13.788px;color:#353433;white-space:nowrap;letter-spacing:-0.45px;right:19.55px;text-align:right;">0</div>
<div style="position:absolute;left:232.00px;top:199.11px;width:59.00px;height:17.39px;background:#fadec7"></div>
<div style="position:absolute;left:291.00px;top:199.11px;width:96.00px;height:17.39px;background:#fef8f4"></div>
<div style="position:absolute;left:178.00px;top:200.61px;width:26.70px;height:14.39px;background:#b5d98c"></div>
<div style="position:absolute;top:202.75px;font-size:12px;line-height:13.788px;color:#353433;white-space:nowrap;letter-spacing:-0.3px;left:10.00px;">Well 100/02-01-013-01W10</div>
<div style="position:absolute;top:202.75px;font-size:12px;line-height:13.788px;color:#353433;white-space:nowrap;letter-spacing:-0.6px;right:484.50px;text-align:right;">53.4%</div>
<div style="position:absolute;top:202.75px;font-size:12px;line-height:13.788px;color:#353433;white-space:nowrap;letter-spacing:-0.6px;right:425.00px;text-align:right;">16.0%</div>
<div style="position:absolute;top:202.75px;font-size:12px;line-height:13.788px;color:#353433;white-space:nowrap;letter-spacing:-0.45px;right:328.75px;text-align:right;">($1,123,200)</div>
<div style="position:absolute;top:202.75px;font-size:12px;line-height:13.788px;color:#353433;white-space:nowrap;letter-spacing:-0.6px;right:274.30px;text-align:right;">0.0%</div>
<div style="position:absolute;top:202.75px;font-size:12px;line-height:13.788px;color:#353433;white-space:nowrap;letter-spacing:-0.45px;right:187.55px;text-align:right;">0</div>
<div style="position:absolute;top:202.75px;font-size:12px;line-height:13.788px;color:#353433;white-space:nowrap;letter-spacing:-0.6px;right:115.20px;text-align:right;">0.0%</div>
<div style="position:absolute;top:202.75px;font-size:12px;line-height:13.788px;color:#353433;white-space:nowrap;letter-spacing:-0.45px;right:19.55px;text-align:right;">0</div>
<div style="position:absolute;left:232.00px;top:216.50px;width:59.00px;height:17.39px;background:#fbe4d1"></div>
<div style="position:absolute;left:291.00px;top:216.50px;width:96.00px;height:17.39px;background:#fef8f3"></div>
<div style="position:absolute;left:178.00px;top:218.00px;width:32.40px;height:14.39px;background:#b5d98c"></div>
<div style="position:absolute;top:220.14px;font-size:12px;line-height:13.788px;color:#353433;white-space:nowrap;letter-spacing:-0.3px;left:10.00px;">Well 100/02-01-014-01W7</div>
<div style="position:absolute;top:220.14px;font-size:12px;line-height:13.788px;color:#353433;white-space:nowrap;letter-spacing:-0.6px;right:484.50px;text-align:right;">64.8%</div>
<div style="position:absolute;top:220.14px;font-size:12px;line-height:13.788px;color:#353433;white-space:nowrap;letter-spacing:-0.6px;right:425.00px;text-align:right;">13.3%</div>
<div style="position:absolute;top:220.14px;font-size:12px;line-height:13.788px;color:#353433;white-space:nowrap;letter-spacing:-0.45px;right:328.75px;text-align:right;">($1,209,600)</div>
<div style="position:absolute;top:220.14px;font-size:12px;line-height:13.788px;color:#353433;white-space:nowrap;letter-spacing:-0.6px;right:274.30px;text-align:right;">0.0%</div>
<div style="position:absolute;top:220.14px;font-size:12px;line-height:13.788px;color:#353433;white-space:nowrap;letter-spacing:-0.45px;right:187.55px;text-align:right;">0</div>
<div style="position:absolute;top:220.14px;font-size:12px;line-height:13.788px;color:#353433;white-space:nowrap;letter-spacing:-0.6px;right:115.20px;text-align:right;">0.0%</div>
<div style="position:absolute;top:220.14px;font-size:12px;line-height:13.788px;color:#353433;white-space:nowrap;letter-spacing:-0.45px;right:19.55px;text-align:right;">0</div>
<div style="position:absolute;left:232.00px;top:233.89px;width:59.00px;height:17.39px;background:#fbe4d1"></div>
<div style="position:absolute;left:291.00px;top:233.89px;width:96.00px;height:17.39px;background:#fef8f3"></div>
<div style="position:absolute;left:178.00px;top:235.39px;width:30.55px;height:14.39px;background:#b5d98c"></div>
<div style="position:absolute;top:237.53px;font-size:12px;line-height:13.788px;color:#353433;white-space:nowrap;letter-spacing:-0.3px;left:10.00px;">Well 100/02-01-014-01W6</div>
<div style="position:absolute;top:237.53px;font-size:12px;line-height:13.788px;color:#353433;white-space:nowrap;letter-spacing:-0.6px;right:484.50px;text-align:right;">61.1%</div>
<div style="position:absolute;top:237.53px;font-size:12px;line-height:13.788px;color:#353433;white-space:nowrap;letter-spacing:-0.6px;right:425.00px;text-align:right;">13.2%</div>
<div style="position:absolute;top:237.53px;font-size:12px;line-height:13.788px;color:#353433;white-space:nowrap;letter-spacing:-0.45px;right:328.75px;text-align:right;">($1,195,200)</div>
<div style="position:absolute;top:237.53px;font-size:12px;line-height:13.788px;color:#353433;white-space:nowrap;letter-spacing:-0.6px;right:274.30px;text-align:right;">0.0%</div>
<div style="position:absolute;top:237.53px;font-size:12px;line-height:13.788px;color:#353433;white-space:nowrap;letter-spacing:-0.45px;right:187.55px;text-align:right;">0</div>
<div style="position:absolute;top:237.53px;font-size:12px;line-height:13.788px;color:#353433;white-space:nowrap;letter-spacing:-0.6px;right:115.20px;text-align:right;">0.0%</div>
<div style="position:absolute;top:237.53px;font-size:12px;line-height:13.788px;color:#353433;white-space:nowrap;letter-spacing:-0.45px;right:19.55px;text-align:right;">0</div>
<div style="position:absolute;left:232.00px;top:251.28px;width:59.00px;height:17.39px;background:#fbe5d3"></div>
<div style="position:absolute;left:291.00px;top:251.28px;width:96.00px;height:17.39px;background:#fef8f3"></div>
<div style="position:absolute;left:178.00px;top:252.78px;width:31.80px;height:14.39px;background:#b5d98c"></div>
<div style="position:absolute;top:254.92px;font-size:12px;line-height:13.788px;color:#353433;white-space:nowrap;letter-spacing:-0.3px;left:10.00px;">Well 100/01-01-014-01W6</div>
<div style="position:absolute;top:254.92px;font-size:12px;line-height:13.788px;color:#353433;white-space:nowrap;letter-spacing:-0.6px;right:484.50px;text-align:right;">63.6%</div>
<div style="position:absolute;top:254.92px;font-size:12px;line-height:13.788px;color:#353433;white-space:nowrap;letter-spacing:-0.6px;right:425.00px;text-align:right;">12.7%</div>
<div style="position:absolute;top:254.92px;font-size:12px;line-height:13.788px;color:#353433;white-space:nowrap;letter-spacing:-0.45px;right:328.75px;text-align:right;">($1,209,600)</div>
<div style="position:absolute;top:254.92px;font-size:12px;line-height:13.788px;color:#353433;white-space:nowrap;letter-spacing:-0.6px;right:274.30px;text-align:right;">0.0%</div>
<div style="position:absolute;top:254.92px;font-size:12px;line-height:13.788px;color:#353433;white-space:nowrap;letter-spacing:-0.45px;right:187.55px;text-align:right;">0</div>
<div style="position:absolute;top:254.92px;font-size:12px;line-height:13.788px;color:#353433;white-space:nowrap;letter-spacing:-0.6px;right:115.20px;text-align:right;">0.0%</div>
<div style="position:absolute;top:254.92px;font-size:12px;line-height:13.788px;color:#353433;white-space:nowrap;letter-spacing:-0.45px;right:19.55px;text-align:right;">0</div>
<div style="position:absolute;left:232.00px;top:268.67px;width:59.00px;height:17.39px;background:#fce7d6"></div>
<div style="position:absolute;left:291.00px;top:268.67px;width:96.00px;height:17.39px;background:#fcecde"></div>
<div style="position:absolute;left:387.00px;top:268.67px;width:55.30px;height:17.39px;background:#fdf3eb"></div>
<div style="position:absolute;left:442.30px;top:268.67px;width:86.70px;height:17.39px;background:#fdeee2"></div>
<div style="position:absolute;left:529.00px;top:268.67px;width:72.00px;height:17.39px;background:#fffcfa"></div>
<div style="position:absolute;left:601.00px;top:268.67px;width:95.70px;height:17.39px;background:#f0964e"></div>
<div style="position:absolute;left:178.00px;top:270.17px;width:19.85px;height:14.39px;background:#b5d98c"></div>
<div style="position:absolute;top:272.31px;font-size:12px;line-height:13.788px;color:#353433;white-space:nowrap;letter-spacing:-0.3px;left:10.00px;">Facility 2B</div>
<div style="position:absolute;top:272.31px;font-size:12px;line-height:13.788px;color:#353433;white-space:nowrap;letter-spacing:-0.6px;right:484.50px;text-align:right;">39.7%</div>
<div style="position:absolute;top:272.31px;font-size:12px;line-height:13.788px;color:#353433;white-space:nowrap;letter-spacing:-0.6px;right:425.00px;text-align:right;">11.7%</div>
<div style="position:absolute;top:272.31px;font-size:12px;line-height:13.788px;color:#353433;white-space:nowrap;letter-spacing:-0.45px;right:328.75px;text-align:right;">($3,332,467)</div>
<div style="position:absolute;top:272.31px;font-size:12px;line-height:13.788px;color:#353433;white-space:nowrap;letter-spacing:-0.6px;right:274.30px;text-align:right;">5.4%</div>
<div style="position:absolute;top:272.31px;font-size:12px;line-height:13.788px;color:#353433;white-space:nowrap;letter-spacing:-0.45px;right:187.55px;text-align:right;">-30</div>
<div style="position:absolute;top:272.31px;font-size:12px;line-height:13.788px;color:#353433;white-space:nowrap;letter-spacing:-0.6px;right:115.20px;text-align:right;">1.9%</div>
<div style="position:absolute;top:272.31px;font-size:12px;line-height:13.788px;color:#353433;white-space:nowrap;letter-spacing:-0.45px;right:19.55px;text-align:right;">-395</div>
<div style="position:absolute;left:232.00px;top:286.06px;width:59.00px;height:17.39px;background:#fdeee3"></div>
<div style="position:absolute;left:291.00px;top:286.06px;width:96.00px;height:17.39px;background:#fbe3cf"></div>
<div style="position:absolute;left:442.30px;top:286.06px;width:86.70px;height:17.39px;background:#f6f9fa"></div>
<div style="position:absolute;left:178.00px;top:287.56px;width:10.70px;height:14.39px;background:#b5d98c"></div>
<div style="position:absolute;top:289.70px;font-size:12px;line-height:13.788px;color:#353433;white-space:nowrap;letter-spacing:-0.3px;left:10.00px;">Prod 100/01-01-013-01W11</div>
<div style="position:absolute;top:289.70px;font-size:12px;line-height:13.788px;color:#353433;white-space:nowrap;letter-spacing:-0.6px;right:484.50px;text-align:right;">21.4%</div>
<div style="position:absolute;top:289.70px;font-size:12px;line-height:13.788px;color:#353433;white-space:nowrap;letter-spacing:-0.6px;right:425.00px;text-align:right;">8.2%</div>
<div style="position:absolute;top:289.70px;font-size:12px;line-height:13.788px;color:#353433;white-space:nowrap;letter-spacing:-0.45px;right:328.75px;text-align:right;">($4,920,000)</div>
<div style="position:absolute;top:289.70px;font-size:12px;line-height:13.788px;color:#353433;white-space:nowrap;letter-spacing:-0.6px;right:274.30px;text-align:right;">0.0%</div>
<div style="position:absolute;top:289.70px;font-size:12px;line-height:13.788px;color:#353433;white-space:nowrap;letter-spacing:-0.45px;right:187.55px;text-align:right;">5</div>
<div style="position:absolute;top:289.70px;font-size:12px;line-height:13.788px;color:#353433;white-space:nowrap;letter-spacing:-0.45px;right:19.55px;text-align:right;">0</div>
<div style="position:absolute;left:232.00px;top:303.45px;width:59.00px;height:17.39px;background:#fef6f0"></div>
<div style="position:absolute;left:291.00px;top:303.45px;width:96.00px;height:17.39px;background:#fdf1e7"></div>
<div style="position:absolute;left:178.00px;top:304.95px;width:7.50px;height:14.39px;background:#b5d98c"></div>
<div style="position:absolute;top:307.09px;font-size:12px;line-height:13.788px;color:#353433;white-space:nowrap;letter-spacing:-0.3px;left:10.00px;">Prod 100/02-01-013-01W11-P</div>
<div style="position:absolute;top:307.09px;font-size:12px;line-height:13.788px;color:#353433;white-space:nowrap;letter-spacing:-0.6px;right:484.50px;text-align:right;">15.0%</div>
<div style="position:absolute;top:307.09px;font-size:12px;line-height:13.788px;color:#353433;white-space:nowrap;letter-spacing:-0.6px;right:425.00px;text-align:right;">4.2%</div>
<div style="position:absolute;top:307.09px;font-size:12px;line-height:13.788px;color:#353433;white-space:nowrap;letter-spacing:-0.45px;right:328.75px;text-align:right;">($2,460,000)</div>
<div style="position:absolute;top:307.09px;font-size:12px;line-height:13.788px;color:#353433;white-space:nowrap;letter-spacing:-0.6px;right:274.30px;text-align:right;">0.0%</div>
<div style="position:absolute;top:307.09px;font-size:12px;line-height:13.788px;color:#353433;white-space:nowrap;letter-spacing:-0.45px;right:187.55px;text-align:right;">0</div>
<div style="position:absolute;top:307.09px;font-size:12px;line-height:13.788px;color:#353433;white-space:nowrap;letter-spacing:-0.45px;right:19.55px;text-align:right;">0</div>
<div style="position:absolute;left:232.00px;top:320.84px;width:59.00px;height:17.39px;background:#fef9f4"></div>
<div style="position:absolute;left:291.00px;top:320.84px;width:96.00px;height:17.39px;background:#ffffff"></div>
<div style="position:absolute;left:178.00px;top:322.34px;width:34.20px;height:14.39px;background:#b5d98c"></div>
<div style="position:absolute;top:324.48px;font-size:12px;line-height:13.788px;color:#353433;white-space:nowrap;letter-spacing:-0.3px;left:10.00px;">Gathering Pipeline 3B</div>
<div style="position:absolute;top:324.48px;font-size:12px;line-height:13.788px;color:#353433;white-space:nowrap;letter-spacing:-0.6px;right:484.50px;text-align:right;">68.4%</div>
<div style="position:absolute;top:324.48px;font-size:12px;line-height:13.788px;color:#353433;white-space:nowrap;letter-spacing:-0.6px;right:425.00px;text-align:right;">3.1%</div>
<div style="position:absolute;top:324.48px;font-size:12px;line-height:13.788px;color:#353433;white-space:nowrap;letter-spacing:-0.45px;right:328.75px;text-align:right;">($43,200)</div>
<div style="position:absolute;top:324.48px;font-size:12px;line-height:13.788px;color:#353433;white-space:nowrap;letter-spacing:-0.6px;right:274.30px;text-align:right;">0.0%</div>
<div style="position:absolute;top:324.48px;font-size:12px;line-height:13.788px;color:#353433;white-space:nowrap;letter-spacing:-0.45px;right:187.55px;text-align:right;">0</div>
<div style="position:absolute;top:324.48px;font-size:12px;line-height:13.788px;color:#353433;white-space:nowrap;letter-spacing:-0.6px;right:115.20px;text-align:right;">0.0%</div>
<div style="position:absolute;top:324.48px;font-size:12px;line-height:13.788px;color:#353433;white-space:nowrap;letter-spacing:-0.45px;right:19.55px;text-align:right;">0</div>
<div style="position:absolute;left:232.00px;top:338.23px;width:59.00px;height:17.39px;background:#fefaf7"></div>
<div style="position:absolute;left:291.00px;top:338.23px;width:96.00px;height:17.39px;background:#fef7f2"></div>
<div style="position:absolute;left:178.00px;top:339.73px;width:5.15px;height:14.39px;background:#b5d98c"></div>
<div style="position:absolute;top:341.87px;font-size:12px;line-height:13.788px;color:#353433;white-space:nowrap;letter-spacing:-0.3px;left:10.00px;">Prod 100/01-01-013-01W12</div>
<div style="position:absolute;top:341.87px;font-size:12px;line-height:13.788px;color:#353433;white-space:nowrap;letter-spacing:-0.6px;right:484.50px;text-align:right;">10.3%</div>
<div style="position:absolute;top:341.87px;font-size:12px;line-height:13.788px;color:#353433;white-space:nowrap;letter-spacing:-0.6px;right:425.00px;text-align:right;">2.2%</div>
<div style="position:absolute;top:341.87px;font-size:12px;line-height:13.788px;color:#353433;white-space:nowrap;letter-spacing:-0.45px;right:328.75px;text-align:right;">($1,370,000)</div>
<div style="position:absolute;top:341.87px;font-size:12px;line-height:13.788px;color:#353433;white-space:nowrap;letter-spacing:-0.6px;right:274.30px;text-align:right;">0.0%</div>
<div style="position:absolute;top:341.87px;font-size:12px;line-height:13.788px;color:#353433;white-space:nowrap;letter-spacing:-0.45px;right:187.55px;text-align:right;">0</div>
<div style="position:absolute;top:341.87px;font-size:12px;line-height:13.788px;color:#353433;white-space:nowrap;letter-spacing:-0.45px;right:19.55px;text-align:right;">0</div>
<div style="position:absolute;left:232.00px;top:355.62px;width:59.00px;height:17.39px;background:#fefbf9"></div>
<div style="position:absolute;left:291.00px;top:355.62px;width:96.00px;height:17.39px;background:#fef9f4"></div>
<div style="position:absolute;left:178.00px;top:357.12px;width:2.10px;height:14.39px;background:#b5d98c"></div>
<div style="position:absolute;top:359.26px;font-size:12px;line-height:13.788px;color:#353433;white-space:nowrap;letter-spacing:-0.3px;left:10.00px;">Prod 100/01-01-013-01W2</div>
<div style="position:absolute;top:359.26px;font-size:12px;line-height:13.788px;color:#353433;white-space:nowrap;letter-spacing:-0.6px;right:484.50px;text-align:right;">4.2%</div>
<div style="position:absolute;top:359.26px;font-size:12px;line-height:13.788px;color:#353433;white-space:nowrap;letter-spacing:-0.6px;right:425.00px;text-align:right;">1.8%</div>
<div style="position:absolute;top:359.26px;font-size:12px;line-height:13.788px;color:#353433;white-space:nowrap;letter-spacing:-0.45px;right:328.75px;text-align:right;">($1,100,000)</div>
<div style="position:absolute;top:359.26px;font-size:12px;line-height:13.788px;color:#353433;white-space:nowrap;letter-spacing:-0.6px;right:274.30px;text-align:right;">0.0%</div>
<div style="position:absolute;top:359.26px;font-size:12px;line-height:13.788px;color:#353433;white-space:nowrap;letter-spacing:-0.45px;right:187.55px;text-align:right;">0</div>
<div style="position:absolute;top:359.26px;font-size:12px;line-height:13.788px;color:#353433;white-space:nowrap;letter-spacing:-0.45px;right:19.55px;text-align:right;">0</div>
<div style="position:absolute;left:232.00px;top:373.01px;width:59.00px;height:17.39px;background:#fffcfa"></div>
<div style="position:absolute;left:291.00px;top:373.01px;width:96.00px;height:17.39px;background:#fffefe"></div>
<div style="position:absolute;left:387.00px;top:373.01px;width:55.30px;height:17.39px;background:#fffdfc"></div>
<div style="position:absolute;left:442.30px;top:373.01px;width:86.70px;height:17.39px;background:#c5d8df"></div>
<div style="position:absolute;left:178.00px;top:374.51px;width:9.25px;height:14.39px;background:#b5d98c"></div>
<div style="position:absolute;top:376.65px;font-size:12px;line-height:13.788px;color:#353433;white-space:nowrap;letter-spacing:-0.3px;left:10.00px;">Well 100/01-01-013-01W6</div>
<div style="position:absolute;top:376.65px;font-size:12px;line-height:13.788px;color:#353433;white-space:nowrap;letter-spacing:-0.6px;right:484.50px;text-align:right;">18.5%</div>
<div style="position:absolute;top:376.65px;font-size:12px;line-height:13.788px;color:#353433;white-space:nowrap;letter-spacing:-0.6px;right:425.00px;text-align:right;">1.3%</div>
<div style="position:absolute;top:376.65px;font-size:12px;line-height:13.788px;color:#353433;white-space:nowrap;letter-spacing:-0.45px;right:328.75px;text-align:right;">($92,800)</div>
<div style="position:absolute;top:376.65px;font-size:12px;line-height:13.788px;color:#353433;white-space:nowrap;letter-spacing:-0.6px;right:274.30px;text-align:right;">0.8%</div>
<div style="position:absolute;top:376.65px;font-size:12px;line-height:13.788px;color:#353433;white-space:nowrap;letter-spacing:-0.45px;right:187.55px;text-align:right;">32</div>
<div style="position:absolute;top:376.65px;font-size:12px;line-height:13.788px;color:#353433;white-space:nowrap;letter-spacing:-0.6px;right:115.20px;text-align:right;">0.0%</div>
<div style="position:absolute;top:376.65px;font-size:12px;line-height:13.788px;color:#353433;white-space:nowrap;letter-spacing:-0.45px;right:19.55px;text-align:right;">0</div>
<div style="position:absolute;left:232.00px;top:390.40px;width:59.00px;height:17.39px;background:#fffdfb"></div>
<div style="position:absolute;left:291.00px;top:390.40px;width:96.00px;height:17.39px;background:#ffffff"></div>
<div style="position:absolute;left:529.00px;top:390.40px;width:72.00px;height:17.39px;background:#f5f8fa"></div>
<div style="position:absolute;left:601.00px;top:390.40px;width:95.70px;height:17.39px;background:#fbfcfd"></div>
<div style="position:absolute;left:178.00px;top:391.90px;width:30.65px;height:14.39px;background:#b5d98c"></div>
<div style="position:absolute;top:394.04px;font-size:12px;line-height:13.788px;color:#353433;white-space:nowrap;letter-spacing:-0.3px;left:10.00px;">Pipeline 2B</div>
<div style="position:absolute;top:394.04px;font-size:12px;line-height:13.788px;color:#353433;white-space:nowrap;letter-spacing:-0.6px;right:484.50px;text-align:right;">61.3%</div>
<div style="position:absolute;top:394.04px;font-size:12px;line-height:13.788px;color:#353433;white-space:nowrap;letter-spacing:-0.6px;right:425.00px;text-align:right;">1.1%</div>
<div style="position:absolute;top:394.04px;font-size:12px;line-height:13.788px;color:#353433;white-space:nowrap;letter-spacing:-0.45px;right:328.75px;text-align:right;">($43,200)</div>
<div style="position:absolute;top:394.04px;font-size:12px;line-height:13.788px;color:#353433;white-space:nowrap;letter-spacing:-0.6px;right:274.30px;text-align:right;">0.0%</div>
<div style="position:absolute;top:394.04px;font-size:12px;line-height:13.788px;color:#353433;white-space:nowrap;letter-spacing:-0.45px;right:187.55px;text-align:right;">0</div>
<div style="position:absolute;top:394.04px;font-size:12px;line-height:13.788px;color:#353433;white-space:nowrap;letter-spacing:-0.6px;right:115.20px;text-align:right;">-3.0%</div>
<div style="position:absolute;top:394.04px;font-size:12px;line-height:13.788px;color:#353433;white-space:nowrap;letter-spacing:-0.45px;right:19.55px;text-align:right;">40</div>
<div style="position:absolute;left:232.00px;top:407.79px;width:59.00px;height:17.39px;background:#fffdfc"></div>
<div style="position:absolute;left:291.00px;top:407.79px;width:96.00px;height:17.39px;background:#fffcfa"></div>
<div style="position:absolute;left:387.00px;top:407.79px;width:55.30px;height:17.39px;background:#fffefd"></div>
<div style="position:absolute;left:442.30px;top:407.79px;width:86.70px;height:17.39px;background:#fef9f4"></div>
<div style="position:absolute;left:178.00px;top:409.29px;width:2.00px;height:14.39px;background:#b5d98c"></div>
<div style="position:absolute;top:411.43px;font-size:12px;line-height:13.788px;color:#353433;white-space:nowrap;letter-spacing:-0.3px;left:10.00px;">Prod 100/01-01-013-01W9</div>
<div style="position:absolute;top:411.43px;font-size:12px;line-height:13.788px;color:#353433;white-space:nowrap;letter-spacing:-0.6px;right:484.50px;text-align:right;">4.0%</div>
<div style="position:absolute;top:411.43px;font-size:12px;line-height:13.788px;color:#353433;white-space:nowrap;letter-spacing:-0.6px;right:425.00px;text-align:right;">0.9%</div>
<div style="position:absolute;top:411.43px;font-size:12px;line-height:13.788px;color:#353433;white-space:nowrap;letter-spacing:-0.45px;right:328.75px;text-align:right;">($550,000)</div>
<div style="position:absolute;top:411.43px;font-size:12px;line-height:13.788px;color:#353433;white-space:nowrap;letter-spacing:-0.6px;right:274.30px;text-align:right;">0.6%</div>
<div style="position:absolute;top:411.43px;font-size:12px;line-height:13.788px;color:#353433;white-space:nowrap;letter-spacing:-0.45px;right:187.55px;text-align:right;">-11</div>
<div style="position:absolute;top:411.43px;font-size:12px;line-height:13.788px;color:#353433;white-space:nowrap;letter-spacing:-0.45px;right:19.55px;text-align:right;">0</div>
<div style="position:absolute;left:232.00px;top:425.18px;width:59.00px;height:17.39px;background:#fffdfc"></div>
<div style="position:absolute;left:291.00px;top:425.18px;width:96.00px;height:17.39px;background:#fffcfa"></div>
<div style="position:absolute;left:178.00px;top:426.68px;width:0.65px;height:14.39px;background:#b5d98c"></div>
<div style="position:absolute;top:428.82px;font-size:12px;line-height:13.788px;color:#353433;white-space:nowrap;letter-spacing:-0.3px;left:10.00px;">Prod 100/01-01-028-01W1P</div>
<div style="position:absolute;top:428.82px;font-size:12px;line-height:13.788px;color:#353433;white-space:nowrap;letter-spacing:-0.6px;right:484.50px;text-align:right;">1.3%</div>
<div style="position:absolute;top:428.82px;font-size:12px;line-height:13.788px;color:#353433;white-space:nowrap;letter-spacing:-0.6px;right:425.00px;text-align:right;">0.9%</div>
<div style="position:absolute;top:428.82px;font-size:12px;line-height:13.788px;color:#353433;white-space:nowrap;letter-spacing:-0.45px;right:328.75px;text-align:right;">($550,000)</div>
<div style="position:absolute;top:428.82px;font-size:12px;line-height:13.788px;color:#353433;white-space:nowrap;letter-spacing:-0.6px;right:274.30px;text-align:right;">0.0%</div>
<div style="position:absolute;top:428.82px;font-size:12px;line-height:13.788px;color:#353433;white-space:nowrap;letter-spacing:-0.45px;right:187.55px;text-align:right;">0</div>
<div style="position:absolute;top:428.82px;font-size:12px;line-height:13.788px;color:#353433;white-space:nowrap;letter-spacing:-0.45px;right:19.55px;text-align:right;">0</div>
<div style="position:absolute;left:232.00px;top:442.57px;width:59.00px;height:17.39px;background:#fffefd"></div>
<div style="position:absolute;left:291.00px;top:442.57px;width:96.00px;height:17.39px;background:#ffffff"></div>
<div style="position:absolute;left:178.00px;top:444.07px;width:43.65px;height:14.39px;background:#b5d98c"></div>
<div style="position:absolute;top:446.21px;font-size:12px;line-height:13.788px;color:#353433;white-space:nowrap;letter-spacing:-0.3px;left:10.00px;">Pad 12-3</div>
<div style="position:absolute;top:446.21px;font-size:12px;line-height:13.788px;color:#353433;white-space:nowrap;letter-spacing:-0.6px;right:484.50px;text-align:right;">87.3%</div>
<div style="position:absolute;top:446.21px;font-size:12px;line-height:13.788px;color:#353433;white-space:nowrap;letter-spacing:-0.6px;right:425.00px;text-align:right;">0.6%</div>
<div style="position:absolute;top:446.21px;font-size:12px;line-height:13.788px;color:#353433;white-space:nowrap;letter-spacing:-0.45px;right:328.75px;text-align:right;">($4,000)</div>
<div style="position:absolute;top:446.21px;font-size:12px;line-height:13.788px;color:#353433;white-space:nowrap;letter-spacing:-0.6px;right:274.30px;text-align:right;">0.0%</div>
<div style="position:absolute;top:446.21px;font-size:12px;line-height:13.788px;color:#353433;white-space:nowrap;letter-spacing:-0.45px;right:187.55px;text-align:right;">0</div>
<div style="position:absolute;top:446.21px;font-size:12px;line-height:13.788px;color:#353433;white-space:nowrap;letter-spacing:-0.6px;right:115.20px;text-align:right;">0.0%</div>
<div style="position:absolute;top:446.21px;font-size:12px;line-height:13.788px;color:#353433;white-space:nowrap;letter-spacing:-0.45px;right:19.55px;text-align:right;">0</div>
<div style="position:absolute;left:232.00px;top:459.96px;width:59.00px;height:17.39px;background:#fffefd"></div>
<div style="position:absolute;left:291.00px;top:459.96px;width:96.00px;height:17.39px;background:#ffffff"></div>
<div style="position:absolute;left:387.00px;top:459.96px;width:55.30px;height:17.39px;background:#fdfefe"></div>
<div style="position:absolute;left:442.30px;top:459.96px;width:86.70px;height:17.39px;background:#fbfdfd"></div>
<div style="position:absolute;left:178.00px;top:461.46px;width:50.00px;height:14.39px;background:#b5d98c"></div>
<div style="position:absolute;top:463.60px;font-size:12px;line-height:13.788px;color:#353433;white-space:nowrap;letter-spacing:-0.3px;left:10.00px;">Pad 12-4</div>
<div style="position:absolute;top:463.60px;font-size:12px;line-height:13.788px;color:#353433;white-space:nowrap;letter-spacing:-0.6px;right:484.50px;text-align:right;">100.0%</div>
<div style="position:absolute;top:463.60px;font-size:12px;line-height:13.788px;color:#353433;white-space:nowrap;letter-spacing:-0.6px;right:425.00px;text-align:right;">0.6%</div>
<div style="position:absolute;top:463.60px;font-size:12px;line-height:13.788px;color:#353433;white-space:nowrap;letter-spacing:-0.45px;right:328.75px;text-align:right;">($4,000)</div>
<div style="position:absolute;top:463.60px;font-size:12px;line-height:13.788px;color:#353433;white-space:nowrap;letter-spacing:-0.6px;right:274.30px;text-align:right;">-0.6%</div>
<div style="position:absolute;top:463.60px;font-size:12px;line-height:13.788px;color:#353433;white-space:nowrap;letter-spacing:-0.45px;right:187.55px;text-align:right;">2</div>
<div style="position:absolute;top:463.60px;font-size:12px;line-height:13.788px;color:#353433;white-space:nowrap;letter-spacing:-0.6px;right:115.20px;text-align:right;">0.0%</div>
<div style="position:absolute;top:463.60px;font-size:12px;line-height:13.788px;color:#353433;white-space:nowrap;letter-spacing:-0.45px;right:19.55px;text-align:right;">0</div>
<div style="position:absolute;left:232.00px;top:477.35px;width:59.00px;height:17.39px;background:#fffefd"></div>
<div style="position:absolute;left:291.00px;top:477.35px;width:96.00px;height:17.39px;background:#ffffff"></div>
<div style="position:absolute;left:387.00px;top:477.35px;width:55.30px;height:17.39px;background:#dbe6eb"></div>
<div style="position:absolute;left:442.30px;top:477.35px;width:86.70px;height:17.39px;background:#acc7d2"></div>
<div style="position:absolute;left:178.00px;top:478.85px;width:50.00px;height:14.39px;background:#b5d98c"></div>
<div style="position:absolute;top:480.99px;font-size:12px;line-height:13.788px;color:#353433;white-space:nowrap;letter-spacing:-0.3px;left:10.00px;">Pad 13-1</div>
<div style="position:absolute;top:480.99px;font-size:12px;line-height:13.788px;color:#353433;white-space:nowrap;letter-spacing:-0.6px;right:484.50px;text-align:right;">100.0%</div>
<div style="position:absolute;top:480.99px;font-size:12px;line-height:13.788px;color:#353433;white-space:nowrap;letter-spacing:-0.6px;right:425.00px;text-align:right;">0.6%</div>
<div style="position:absolute;top:480.99px;font-size:12px;line-height:13.788px;color:#353433;white-space:nowrap;letter-spacing:-0.45px;right:328.75px;text-align:right;">($4,000)</div>
<div style="position:absolute;top:480.99px;font-size:12px;line-height:13.788px;color:#353433;white-space:nowrap;letter-spacing:-0.6px;right:274.30px;text-align:right;">-12.8%</div>
<div style="position:absolute;top:480.99px;font-size:12px;line-height:13.788px;color:#353433;white-space:nowrap;letter-spacing:-0.45px;right:187.55px;text-align:right;">46</div>
<div style="position:absolute;top:480.99px;font-size:12px;line-height:13.788px;color:#353433;white-space:nowrap;letter-spacing:-0.6px;right:115.20px;text-align:right;">0.0%</div>
<div style="position:absolute;top:480.99px;font-size:12px;line-height:13.788px;color:#353433;white-space:nowrap;letter-spacing:-0.45px;right:19.55px;text-align:right;">0</div>
<div style="position:absolute;left:232.00px;top:494.74px;width:59.00px;height:17.39px;background:#fffefd"></div>
<div style="position:absolute;left:291.00px;top:494.74px;width:96.00px;height:17.39px;background:#ffffff"></div>
<div style="position:absolute;left:178.00px;top:496.24px;width:50.00px;height:14.39px;background:#b5d98c"></div>
<div style="position:absolute;top:498.38px;font-size:12px;line-height:13.788px;color:#353433;white-space:nowrap;letter-spacing:-0.3px;left:10.00px;">Pad 13-2</div>
<div style="position:absolute;top:498.38px;font-size:12px;line-height:13.788px;color:#353433;white-space:nowrap;letter-spacing:-0.6px;right:484.50px;text-align:right;">100.0%</div>
<div style="position:absolute;top:498.38px;font-size:12px;line-height:13.788px;color:#353433;white-space:nowrap;letter-spacing:-0.6px;right:425.00px;text-align:right;">0.6%</div>
<div style="position:absolute;top:498.38px;font-size:12px;line-height:13.788px;color:#353433;white-space:nowrap;letter-spacing:-0.45px;right:328.75px;text-align:right;">($4,000)</div>
<div style="position:absolute;top:498.38px;font-size:12px;line-height:13.788px;color:#353433;white-space:nowrap;letter-spacing:-0.6px;right:274.30px;text-align:right;">0.0%</div>
<div style="position:absolute;top:498.38px;font-size:12px;line-height:13.788px;color:#353433;white-space:nowrap;letter-spacing:-0.45px;right:187.55px;text-align:right;">0</div>
<div style="position:absolute;top:498.38px;font-size:12px;line-height:13.788px;color:#353433;white-space:nowrap;letter-spacing:-0.6px;right:115.20px;text-align:right;">0.0%</div>
<div style="position:absolute;top:498.38px;font-size:12px;line-height:13.788px;color:#353433;white-space:nowrap;letter-spacing:-0.45px;right:19.55px;text-align:right;">0</div>
<div style="position:absolute;left:232.00px;top:512.13px;width:59.00px;height:17.39px;background:#fffefd"></div>
<div style="position:absolute;left:291.00px;top:512.13px;width:96.00px;height:17.39px;background:#ffffff"></div>
<div style="position:absolute;left:178.00px;top:513.63px;width:46.00px;height:14.39px;background:#b5d98c"></div>
<div style="position:absolute;top:515.77px;font-size:12px;line-height:13.788px;color:#353433;white-space:nowrap;letter-spacing:-0.3px;left:10.00px;">Pad 13-3</div>
<div style="position:absolute;top:515.77px;font-size:12px;line-height:13.788px;color:#353433;white-space:nowrap;letter-spacing:-0.6px;right:484.50px;text-align:right;">92.0%</div>
<div style="position:absolute;top:515.77px;font-size:12px;line-height:13.788px;color:#353433;white-space:nowrap;letter-spacing:-0.6px;right:425.00px;text-align:right;">0.6%</div>
<div style="position:absolute;top:515.77px;font-size:12px;line-height:13.788px;color:#353433;white-space:nowrap;letter-spacing:-0.45px;right:328.75px;text-align:right;">($4,000)</div>
<div style="position:absolute;top:515.77px;font-size:12px;line-height:13.788px;color:#353433;white-space:nowrap;letter-spacing:-0.6px;right:274.30px;text-align:right;">0.0%</div>
<div style="position:absolute;top:515.77px;font-size:12px;line-height:13.788px;color:#353433;white-space:nowrap;letter-spacing:-0.45px;right:187.55px;text-align:right;">0</div>
<div style="position:absolute;top:515.77px;font-size:12px;line-height:13.788px;color:#353433;white-space:nowrap;letter-spacing:-0.6px;right:115.20px;text-align:right;">0.0%</div>
<div style="position:absolute;top:515.77px;font-size:12px;line-height:13.788px;color:#353433;white-space:nowrap;letter-spacing:-0.45px;right:19.55px;text-align:right;">0</div>
<div style="position:absolute;left:232.00px;top:529.52px;width:59.00px;height:17.39px;background:#fffefd"></div>
<div style="position:absolute;left:291.00px;top:529.52px;width:96.00px;height:17.39px;background:#ffffff"></div>
<div style="position:absolute;left:387.00px;top:529.52px;width:55.30px;height:17.39px;background:#fefeff"></div>
<div style="position:absolute;left:442.30px;top:529.52px;width:86.70px;height:17.39px;background:#f4f8f9"></div>
<div style="position:absolute;left:178.00px;top:531.02px;width:47.85px;height:14.39px;background:#b5d98c"></div>
<div style="position:absolute;top:533.16px;font-size:12px;line-height:13.788px;color:#353433;white-space:nowrap;letter-spacing:-0.3px;left:10.00px;">Pad 13-4</div>
<div style="position:absolute;top:533.16px;font-size:12px;line-height:13.788px;color:#353433;white-space:nowrap;letter-spacing:-0.6px;right:484.50px;text-align:right;">95.7%</div>
<div style="position:absolute;top:533.16px;font-size:12px;line-height:13.788px;color:#353433;white-space:nowrap;letter-spacing:-0.6px;right:425.00px;text-align:right;">0.6%</div>
<div style="position:absolute;top:533.16px;font-size:12px;line-height:13.788px;color:#353433;white-space:nowrap;letter-spacing:-0.45px;right:328.75px;text-align:right;">($4,000)</div>
<div style="position:absolute;top:533.16px;font-size:12px;line-height:13.788px;color:#353433;white-space:nowrap;letter-spacing:-0.6px;right:274.30px;text-align:right;">-0.3%</div>
<div style="position:absolute;top:533.16px;font-size:12px;line-height:13.788px;color:#353433;white-space:nowrap;letter-spacing:-0.45px;right:187.55px;text-align:right;">6</div>
<div style="position:absolute;top:533.16px;font-size:12px;line-height:13.788px;color:#353433;white-space:nowrap;letter-spacing:-0.6px;right:115.20px;text-align:right;">0.0%</div>
<div style="position:absolute;top:533.16px;font-size:12px;line-height:13.788px;color:#353433;white-space:nowrap;letter-spacing:-0.45px;right:19.55px;text-align:right;">0</div>
<div style="position:absolute;left:232.00px;top:546.91px;width:59.00px;height:17.39px;background:#fffefd"></div>
<div style="position:absolute;left:291.00px;top:546.91px;width:96.00px;height:17.39px;background:#ffffff"></div>
<div style="position:absolute;left:178.00px;top:548.41px;width:41.50px;height:14.39px;background:#b5d98c"></div>
<div style="position:absolute;top:550.55px;font-size:12px;line-height:13.788px;color:#353433;white-space:nowrap;letter-spacing:-0.3px;left:10.00px;">Pad 14-1</div>
<div style="position:absolute;top:550.55px;font-size:12px;line-height:13.788px;color:#353433;white-space:nowrap;letter-spacing:-0.6px;right:484.50px;text-align:right;">83.0%</div>
<div style="position:absolute;top:550.55px;font-size:12px;line-height:13.788px;color:#353433;white-space:nowrap;letter-spacing:-0.6px;right:425.00px;text-align:right;">0.6%</div>
<div style="position:absolute;top:550.55px;font-size:12px;line-height:13.788px;color:#353433;white-space:nowrap;letter-spacing:-0.45px;right:328.75px;text-align:right;">($4,000)</div>
<div style="position:absolute;top:550.55px;font-size:12px;line-height:13.788px;color:#353433;white-space:nowrap;letter-spacing:-0.6px;right:274.30px;text-align:right;">0.0%</div>
<div style="position:absolute;top:550.55px;font-size:12px;line-height:13.788px;color:#353433;white-space:nowrap;letter-spacing:-0.45px;right:187.55px;text-align:right;">0</div>
<div style="position:absolute;top:550.55px;font-size:12px;line-height:13.788px;color:#353433;white-space:nowrap;letter-spacing:-0.6px;right:115.20px;text-align:right;">0.0%</div>
<div style="position:absolute;top:550.55px;font-size:12px;line-height:13.788px;color:#353433;white-space:nowrap;letter-spacing:-0.45px;right:19.55px;text-align:right;">0</div>
<div style="position:absolute;left:232.00px;top:564.30px;width:59.00px;height:17.39px;background:#fffefd"></div>
<div style="position:absolute;left:291.00px;top:564.30px;width:96.00px;height:17.39px;background:#ffffff"></div>
<div style="position:absolute;left:178.00px;top:565.80px;width:41.60px;height:14.39px;background:#b5d98c"></div>
<div style="position:absolute;top:567.94px;font-size:12px;line-height:13.788px;color:#353433;white-space:nowrap;letter-spacing:-0.3px;left:10.00px;">Pad 14-2</div>
<div style="position:absolute;top:567.94px;font-size:12px;line-height:13.788px;color:#353433;white-space:nowrap;letter-spacing:-0.6px;right:484.50px;text-align:right;">83.2%</div>
<div style="position:absolute;top:567.94px;font-size:12px;line-height:13.788px;color:#353433;white-space:nowrap;letter-spacing:-0.6px;right:425.00px;text-align:right;">0.6%</div>
<div style="position:absolute;top:567.94px;font-size:12px;line-height:13.788px;color:#353433;white-space:nowrap;letter-spacing:-0.45px;right:328.75px;text-align:right;">($4,000)</div>
<div style="position:absolute;top:567.94px;font-size:12px;line-height:13.788px;color:#353433;white-space:nowrap;letter-spacing:-0.6px;right:274.30px;text-align:right;">0.0%</div>
<div style="position:absolute;top:567.94px;font-size:12px;line-height:13.788px;color:#353433;white-space:nowrap;letter-spacing:-0.45px;right:187.55px;text-align:right;">0</div>
<div style="position:absolute;top:567.94px;font-size:12px;line-height:13.788px;color:#353433;white-space:nowrap;letter-spacing:-0.6px;right:115.20px;text-align:right;">0.0%</div>
<div style="position:absolute;top:567.94px;font-size:12px;line-height:13.788px;color:#353433;white-space:nowrap;letter-spacing:-0.45px;right:19.55px;text-align:right;">0</div>
<div style="position:absolute;left:232.00px;top:581.69px;width:59.00px;height:17.39px;background:#fffefd"></div>
<div style="position:absolute;left:291.00px;top:581.69px;width:96.00px;height:17.39px;background:#ffffff"></div>
<div style="position:absolute;left:178.00px;top:583.19px;width:41.55px;height:14.39px;background:#b5d98c"></div>
<div style="position:absolute;top:585.33px;font-size:12px;line-height:13.788px;color:#353433;white-space:nowrap;letter-spacing:-0.3px;left:10.00px;">Pad 14-4</div>
<div style="position:absolute;top:585.33px;font-size:12px;line-height:13.788px;color:#353433;white-space:nowrap;letter-spacing:-0.6px;right:484.50px;text-align:right;">83.1%</div>
<div style="position:absolute;top:585.33px;font-size:12px;line-height:13.788px;color:#353433;white-space:nowrap;letter-spacing:-0.6px;right:425.00px;text-align:right;">0.6%</div>
<div style="position:absolute;top:585.33px;font-size:12px;line-height:13.788px;color:#353433;white-space:nowrap;letter-spacing:-0.45px;right:328.75px;text-align:right;">($4,000)</div>
<div style="position:absolute;top:585.33px;font-size:12px;line-height:13.788px;color:#353433;white-space:nowrap;letter-spacing:-0.6px;right:274.30px;text-align:right;">0.0%</div>
<div style="position:absolute;top:585.33px;font-size:12px;line-height:13.788px;color:#353433;white-space:nowrap;letter-spacing:-0.45px;right:187.55px;text-align:right;">0</div>
<div style="position:absolute;top:585.33px;font-size:12px;line-height:13.788px;color:#353433;white-space:nowrap;letter-spacing:-0.6px;right:115.20px;text-align:right;">0.0%</div>
<div style="position:absolute;top:585.33px;font-size:12px;line-height:13.788px;color:#353433;white-space:nowrap;letter-spacing:-0.45px;right:19.55px;text-align:right;">0</div>
<div style="position:absolute;left:232.00px;top:599.08px;width:59.00px;height:17.39px;background:#fffefd"></div>
<div style="position:absolute;left:291.00px;top:599.08px;width:96.00px;height:17.39px;background:#ffffff"></div>
<div style="position:absolute;left:387.00px;top:599.08px;width:55.30px;height:17.39px;background:#fefefe"></div>
<div style="position:absolute;left:442.30px;top:599.08px;width:86.70px;height:17.39px;background:#6898ac"></div>
<div style="position:absolute;left:178.00px;top:600.58px;width:6.35px;height:14.39px;background:#b5d98c"></div>
<div style="position:absolute;top:602.72px;font-size:12px;line-height:13.788px;color:#353433;white-space:nowrap;letter-spacing:-0.3px;left:10.00px;">Well 100/01-01-015-01W1</div>
<div style="position:absolute;top:602.72px;font-size:12px;line-height:13.788px;color:#353433;white-space:nowrap;letter-spacing:-0.6px;right:484.50px;text-align:right;">12.7%</div>
<div style="position:absolute;top:602.72px;font-size:12px;line-height:13.788px;color:#353433;white-space:nowrap;letter-spacing:-0.6px;right:425.00px;text-align:right;">0.6%</div>
<div style="position:absolute;top:602.72px;font-size:12px;line-height:13.788px;color:#353433;white-space:nowrap;letter-spacing:-0.45px;right:328.75px;text-align:right;">($46,400)</div>
<div style="position:absolute;top:602.72px;font-size:12px;line-height:13.788px;color:#353433;white-space:nowrap;letter-spacing:-0.6px;right:274.30px;text-align:right;">-0.4%</div>
<div style="position:absolute;top:602.72px;font-size:12px;line-height:13.788px;color:#353433;white-space:nowrap;letter-spacing:-0.45px;right:187.55px;text-align:right;">84</div>
<div style="position:absolute;top:602.72px;font-size:12px;line-height:13.788px;color:#353433;white-space:nowrap;letter-spacing:-0.6px;right:115.20px;text-align:right;">0.0%</div>
<div style="position:absolute;top:602.72px;font-size:12px;line-height:13.788px;color:#353433;white-space:nowrap;letter-spacing:-0.45px;right:19.55px;text-align:right;">0</div>
<div style="position:absolute;left:232.00px;top:616.47px;width:59.00px;height:17.39px;background:#fffefd"></div>
<div style="position:absolute;left:291.00px;top:616.47px;width:96.00px;height:17.39px;background:#ffffff"></div>
<div style="position:absolute;left:387.00px;top:616.47px;width:55.30px;height:17.39px;background:#fffdfc"></div>
<div style="position:absolute;left:442.30px;top:616.47px;width:86.70px;height:17.39px;background:#dfe9ed"></div>
<div style="position:absolute;left:178.00px;top:617.97px;width:6.35px;height:14.39px;background:#b5d98c"></div>
<div style="position:absolute;top:620.11px;font-size:12px;line-height:13.788px;color:#353433;white-space:nowrap;letter-spacing:-0.3px;left:10.00px;">Well 100/01-01-013-01W4</div>
<div style="position:absolute;top:620.11px;font-size:12px;line-height:13.788px;color:#353433;white-space:nowrap;letter-spacing:-0.6px;right:484.50px;text-align:right;">12.7%</div>
<div style="position:absolute;top:620.11px;font-size:12px;line-height:13.788px;color:#353433;white-space:nowrap;letter-spacing:-0.6px;right:425.00px;text-align:right;">0.5%</div>
<div style="position:absolute;top:620.11px;font-size:12px;line-height:13.788px;color:#353433;white-space:nowrap;letter-spacing:-0.45px;right:328.75px;text-align:right;">($46,400)</div>
<div style="position:absolute;top:620.11px;font-size:12px;line-height:13.788px;color:#353433;white-space:nowrap;letter-spacing:-0.6px;right:274.30px;text-align:right;">0.8%</div>
<div style="position:absolute;top:620.11px;font-size:12px;line-height:13.788px;color:#353433;white-space:nowrap;letter-spacing:-0.45px;right:187.55px;text-align:right;">18</div>
<div style="position:absolute;top:620.11px;font-size:12px;line-height:13.788px;color:#353433;white-space:nowrap;letter-spacing:-0.6px;right:115.20px;text-align:right;">0.0%</div>
<div style="position:absolute;top:620.11px;font-size:12px;line-height:13.788px;color:#353433;white-space:nowrap;letter-spacing:-0.45px;right:19.55px;text-align:right;">0</div>
<div style="position:absolute;left:232.00px;top:633.86px;width:59.00px;height:17.39px;background:#fffefd"></div>
<div style="position:absolute;left:291.00px;top:633.86px;width:96.00px;height:17.39px;background:#ffffff"></div>
<div style="position:absolute;top:637.50px;font-size:12px;line-height:13.788px;color:#353433;white-space:nowrap;letter-spacing:-0.3px;left:10.00px;">Well 100/01-01-013-01W5</div>
<div style="position:absolute;top:637.50px;font-size:12px;line-height:13.788px;color:#353433;white-space:nowrap;letter-spacing:-0.6px;right:484.50px;text-align:right;">0.0%</div>
<div style="position:absolute;top:637.50px;font-size:12px;line-height:13.788px;color:#353433;white-space:nowrap;letter-spacing:-0.6px;right:425.00px;text-align:right;">0.5%</div>
<div style="position:absolute;top:637.50px;font-size:12px;line-height:13.788px;color:#353433;white-space:nowrap;letter-spacing:-0.45px;right:328.75px;text-align:right;">($46,400)</div>
<div style="position:absolute;top:637.50px;font-size:12px;line-height:13.788px;color:#353433;white-space:nowrap;letter-spacing:-0.6px;right:274.30px;text-align:right;">0.0%</div>
<div style="position:absolute;top:637.50px;font-size:12px;line-height:13.788px;color:#353433;white-space:nowrap;letter-spacing:-0.45px;right:187.55px;text-align:right;">0</div>
<div style="position:absolute;top:637.50px;font-size:12px;line-height:13.788px;color:#353433;white-space:nowrap;letter-spacing:-0.6px;right:115.20px;text-align:right;">0.0%</div>
<div style="position:absolute;top:637.50px;font-size:12px;line-height:13.788px;color:#353433;white-space:nowrap;letter-spacing:-0.45px;right:19.55px;text-align:right;">0</div>
<div style="position:absolute;left:232.00px;top:651.25px;width:59.00px;height:17.39px;background:#ffffff"></div>
<div style="position:absolute;left:387.00px;top:651.25px;width:55.30px;height:17.39px;background:#f2f6f8"></div>
<div style="position:absolute;left:442.30px;top:651.25px;width:86.70px;height:17.39px;background:#dfe9ed"></div>
<div style="position:absolute;left:178.00px;top:652.75px;width:49.90px;height:14.39px;background:#b5d98c"></div>
<div style="position:absolute;top:654.89px;font-size:12px;line-height:13.788px;color:#353433;white-space:nowrap;letter-spacing:-0.3px;left:10.00px;">Facility 2A</div>
<div style="position:absolute;top:654.89px;font-size:12px;line-height:13.788px;color:#353433;white-space:nowrap;letter-spacing:-0.6px;right:484.50px;text-align:right;">99.8%</div>
<div style="position:absolute;top:654.89px;font-size:12px;line-height:13.788px;color:#353433;white-space:nowrap;letter-spacing:-0.6px;right:425.00px;text-align:right;">0.0%</div>
<div style="position:absolute;top:654.89px;font-size:12px;line-height:13.788px;color:#353433;white-space:nowrap;letter-spacing:-0.45px;right:328.75px;text-align:right;">$0</div>
<div style="position:absolute;top:654.89px;font-size:12px;line-height:13.788px;color:#353433;white-space:nowrap;letter-spacing:-0.6px;right:274.30px;text-align:right;">-4.7%</div>
<div style="position:absolute;top:654.89px;font-size:12px;line-height:13.788px;color:#353433;white-space:nowrap;letter-spacing:-0.45px;right:187.55px;text-align:right;">18</div>
<div style="position:absolute;top:654.89px;font-size:12px;line-height:13.788px;color:#353433;white-space:nowrap;letter-spacing:-0.6px;right:115.20px;text-align:right;">0.0%</div>
<div style="position:absolute;top:654.89px;font-size:12px;line-height:13.788px;color:#353433;white-space:nowrap;letter-spacing:-0.45px;right:19.55px;text-align:right;">0</div>
<div style="position:absolute;left:232.00px;top:668.64px;width:59.00px;height:17.39px;background:#ffffff"></div>
<div style="position:absolute;top:672.28px;font-size:12px;line-height:13.788px;color:#353433;white-space:nowrap;letter-spacing:-0.3px;left:10.00px;">Facility 2A Production</div>
<div style="position:absolute;top:672.28px;font-size:12px;line-height:13.788px;color:#353433;white-space:nowrap;letter-spacing:-0.6px;right:484.50px;text-align:right;">0.0%</div>
<div style="position:absolute;top:672.28px;font-size:12px;line-height:13.788px;color:#353433;white-space:nowrap;letter-spacing:-0.6px;right:425.00px;text-align:right;">0.0%</div>
<div style="position:absolute;top:672.28px;font-size:12px;line-height:13.788px;color:#353433;white-space:nowrap;letter-spacing:-0.45px;right:328.75px;text-align:right;">$0</div>
<div style="position:absolute;top:672.28px;font-size:12px;line-height:13.788px;color:#353433;white-space:nowrap;letter-spacing:-0.6px;right:274.30px;text-align:right;">0.0%</div>
<div style="position:absolute;top:672.28px;font-size:12px;line-height:13.788px;color:#353433;white-space:nowrap;letter-spacing:-0.45px;right:187.55px;text-align:right;">0</div>
<div style="position:absolute;top:672.28px;font-size:12px;line-height:13.788px;color:#353433;white-space:nowrap;letter-spacing:-0.45px;right:19.55px;text-align:right;">0</div>
<div style="position:absolute;left:5.00px;top:59.49px;width:691.70px;height:1.00px;background:#e6e6e6"></div>
<div style="position:absolute;left:5.00px;top:76.88px;width:691.70px;height:1.00px;background:#e6e6e6"></div>
<div style="position:absolute;left:5.00px;top:94.27px;width:691.70px;height:1.00px;background:#e6e6e6"></div>
<div style="position:absolute;left:5.00px;top:111.66px;width:691.70px;height:1.00px;background:#e6e6e6"></div>
<div style="position:absolute;left:5.00px;top:129.05px;width:691.70px;height:1.00px;background:#e6e6e6"></div>
<div style="position:absolute;left:5.00px;top:146.44px;width:691.70px;height:1.00px;background:#e6e6e6"></div>
<div style="position:absolute;left:5.00px;top:163.83px;width:691.70px;height:1.00px;background:#e6e6e6"></div>
<div style="position:absolute;left:5.00px;top:181.22px;width:691.70px;height:1.00px;background:#e6e6e6"></div>
<div style="position:absolute;left:5.00px;top:198.61px;width:691.70px;height:1.00px;background:#e6e6e6"></div>
<div style="position:absolute;left:5.00px;top:216.00px;width:691.70px;height:1.00px;background:#e6e6e6"></div>
<div style="position:absolute;left:5.00px;top:233.39px;width:691.70px;height:1.00px;background:#e6e6e6"></div>
<div style="position:absolute;left:5.00px;top:250.78px;width:691.70px;height:1.00px;background:#e6e6e6"></div>
<div style="position:absolute;left:5.00px;top:268.17px;width:691.70px;height:1.00px;background:#e6e6e6"></div>
<div style="position:absolute;left:5.00px;top:285.56px;width:691.70px;height:1.00px;background:#e6e6e6"></div>
<div style="position:absolute;left:5.00px;top:302.95px;width:691.70px;height:1.00px;background:#e6e6e6"></div>
<div style="position:absolute;left:5.00px;top:320.34px;width:691.70px;height:1.00px;background:#e6e6e6"></div>
<div style="position:absolute;left:5.00px;top:337.73px;width:691.70px;height:1.00px;background:#e6e6e6"></div>
<div style="position:absolute;left:5.00px;top:355.12px;width:691.70px;height:1.00px;background:#e6e6e6"></div>
<div style="position:absolute;left:5.00px;top:372.51px;width:691.70px;height:1.00px;background:#e6e6e6"></div>
<div style="position:absolute;left:5.00px;top:389.90px;width:691.70px;height:1.00px;background:#e6e6e6"></div>
<div style="position:absolute;left:5.00px;top:407.29px;width:691.70px;height:1.00px;background:#e6e6e6"></div>
<div style="position:absolute;left:5.00px;top:424.68px;width:691.70px;height:1.00px;background:#e6e6e6"></div>
<div style="position:absolute;left:5.00px;top:442.07px;width:691.70px;height:1.00px;background:#e6e6e6"></div>
<div style="position:absolute;left:5.00px;top:459.46px;width:691.70px;height:1.00px;background:#e6e6e6"></div>
<div style="position:absolute;left:5.00px;top:476.85px;width:691.70px;height:1.00px;background:#e6e6e6"></div>
<div style="position:absolute;left:5.00px;top:494.24px;width:691.70px;height:1.00px;background:#e6e6e6"></div>
<div style="position:absolute;left:5.00px;top:511.63px;width:691.70px;height:1.00px;background:#e6e6e6"></div>
<div style="position:absolute;left:5.00px;top:529.02px;width:691.70px;height:1.00px;background:#e6e6e6"></div>
<div style="position:absolute;left:5.00px;top:546.41px;width:691.70px;height:1.00px;background:#e6e6e6"></div>
<div style="position:absolute;left:5.00px;top:563.80px;width:691.70px;height:1.00px;background:#e6e6e6"></div>
<div style="position:absolute;left:5.00px;top:581.19px;width:691.70px;height:1.00px;background:#e6e6e6"></div>
<div style="position:absolute;left:5.00px;top:598.58px;width:691.70px;height:1.00px;background:#e6e6e6"></div>
<div style="position:absolute;left:5.00px;top:615.97px;width:691.70px;height:1.00px;background:#e6e6e6"></div>
<div style="position:absolute;left:5.00px;top:633.36px;width:691.70px;height:1.00px;background:#e6e6e6"></div>
<div style="position:absolute;left:5.00px;top:650.75px;width:691.70px;height:1.00px;background:#e6e6e6"></div>
<div style="position:absolute;left:5.00px;top:668.14px;width:691.70px;height:1.00px;background:#e6e6e6"></div>
<div style="position:absolute;left:5.00px;top:685.53px;width:691.70px;height:1.00px;background:#e6e6e6"></div>
<div style="position:absolute;left:177.20px;top:43.00px;width:0;height:643.00px;border-left:1px dotted #707070"></div>
</div>
<div style="position:absolute;left:1002.00px;top:50.20px;width:8.00px;height:670.00px;background:#f0f0f0"></div>
<div style="position:absolute;left:1002.00px;top:73.60px;width:8.00px;height:322.20px;background:#cccccc"></div>
<svg style="position:absolute;left:1001.5px;top:57px" width="9" height="7"><polyline points="1.5,5 4.5,2 7.5,5" fill="none" stroke="#505050" stroke-width="1"/></svg>
<svg style="position:absolute;left:1001.8px;top:705.2px" width="9" height="7"><polyline points="1.5,2 4.5,5 7.5,2" fill="none" stroke="#505050" stroke-width="1"/></svg>
<div style="position:absolute;top:48.65px;font-size:13.2px;line-height:15.1668px;color:#353433;font-weight:normal;white-space:nowrap;left:1027.80px;">Late and Early</div>
<svg style="position:absolute;left:0;top:0" width="1433" height="746"><path d="M1120.50 77.40 A30.20 30.20 0 0 1 1145.47 90.61 L1135.38 97.48 A18.00 18.00 0 0 0 1120.50 89.60 Z" fill="#ec7a23"/><path d="M1145.47 90.61 A30.20 30.20 0 1 1 1090.31 108.27 L1102.50 108.00 A18.00 18.00 0 1 0 1135.38 97.48 Z" fill="#034f6e"/><path d="M1090.31 108.27 A30.20 30.20 0 0 1 1120.50 77.40 L1120.50 89.60 A18.00 18.00 0 0 0 1102.50 108.00 Z" fill="#8dc63f"/><polyline points="1134.5,80 1137.5,77.5 1147,77.5" fill="none" stroke="#a8a8a8" stroke-width="1"/><polyline points="1085,83.5 1096,83.5 1099,86" fill="none" stroke="#a8a8a8" stroke-width="1"/><polyline points="1090,135.5 1101,135.5 1103,133" fill="none" stroke="#a8a8a8" stroke-width="1"/></svg>
<div style="position:absolute;top:73.00px;font-size:10.5px;line-height:12.0645px;color:#605e5c;font-weight:normal;white-space:nowrap;left:1150.00px;">11</div>
<div style="position:absolute;top:78.80px;font-size:10.5px;line-height:12.0645px;color:#605e5c;font-weight:normal;white-space:nowrap;left:1071.00px;">18</div>
<div style="position:absolute;top:130.90px;font-size:10.5px;line-height:12.0645px;color:#605e5c;font-weight:normal;white-space:nowrap;left:1075.00px;">42</div>
<div style="position:absolute;left:1036.00px;top:155.20px;width:8.6px;height:8.6px;border-radius:50%;background:#ec7a23"></div>
<div style="position:absolute;top:153.99px;font-size:11.5px;line-height:13.2135px;color:#605e5c;font-weight:normal;white-space:nowrap;letter-spacing:-0.1px;left:1047.30px;">Late</div>
<div style="position:absolute;left:1073.60px;top:155.20px;width:8.6px;height:8.6px;border-radius:50%;background:#034f6e"></div>
<div style="position:absolute;top:153.99px;font-size:11.5px;line-height:13.2135px;color:#605e5c;font-weight:normal;white-space:nowrap;letter-spacing:-0.1px;left:1084.00px;">On time</div>
<div style="position:absolute;left:1129.90px;top:155.20px;width:8.6px;height:8.6px;border-radius:50%;background:#8dc63f"></div>
<div style="position:absolute;top:153.99px;font-size:11.5px;line-height:13.2135px;color:#605e5c;font-weight:normal;white-space:nowrap;letter-spacing:-0.1px;left:1141.00px;">Early</div>
<div style="position:absolute;left:1170.60px;top:155.20px;width:8.6px;height:8.6px;border-radius:50%;background:#5f6b6d"></div>
<div style="position:absolute;top:153.99px;font-size:11.5px;line-height:13.2135px;color:#605e5c;font-weight:normal;white-space:nowrap;letter-spacing:-0.1px;left:1181.00px;">N/A</div>
<div style="position:absolute;top:188.85px;font-size:13.2px;line-height:15.1668px;color:#353433;font-weight:normal;white-space:nowrap;letter-spacing:0.25px;left:1027.80px;">Budget Status</div>
<svg style="position:absolute;left:0;top:0" width="1433" height="746"><path d="M1120.00 217.20 A30.20 30.20 0 1 1 1092.43 235.08 L1103.57 240.05 A18.00 18.00 0 1 0 1120.00 229.40 Z" fill="#034f6e"/><path d="M1092.43 235.08 A30.20 30.20 0 0 1 1114.68 217.67 L1116.83 229.68 A18.00 18.00 0 0 0 1103.57 240.05 Z" fill="#8dc63f"/><path d="M1114.68 217.67 A30.20 30.20 0 0 1 1120.00 217.20 L1120.00 229.40 A18.00 18.00 0 0 0 1116.83 229.68 Z" fill="#ec7a23"/><polyline points="1089,220.5 1099.5,220.5 1101.5,223" fill="none" stroke="#a8a8a8" stroke-width="1"/><polyline points="1138,272 1141.5,275.5 1149,275.5" fill="none" stroke="#a8a8a8" stroke-width="1"/></svg>
<div style="position:absolute;top:216.00px;font-size:10.5px;line-height:12.0645px;color:#605e5c;font-weight:normal;white-space:nowrap;left:1074.00px;">11</div>
<div style="position:absolute;top:272.00px;font-size:10.5px;line-height:12.0645px;color:#605e5c;font-weight:normal;white-space:nowrap;left:1152.50px;">58</div>
<div style="position:absolute;left:1041.90px;top:295.40px;width:8.6px;height:8.6px;border-radius:50%;background:#034f6e"></div>
<div style="position:absolute;top:294.19px;font-size:11.5px;line-height:13.2135px;color:#605e5c;font-weight:normal;white-space:nowrap;letter-spacing:-0.1px;left:1052.80px;">On Budget</div>
<div style="position:absolute;left:1113.30px;top:295.40px;width:8.6px;height:8.6px;border-radius:50%;background:#8dc63f"></div>
<div style="position:absolute;top:294.19px;font-size:11.5px;line-height:13.2135px;color:#605e5c;font-weight:normal;white-space:nowrap;letter-spacing:-0.1px;left:1123.60px;">Under</div>
<div style="position:absolute;left:1160.00px;top:295.40px;width:8.6px;height:8.6px;border-radius:50%;background:#ec7a23"></div>
<div style="position:absolute;top:294.19px;font-size:11.5px;line-height:13.2135px;color:#605e5c;font-weight:normal;white-space:nowrap;letter-spacing:-0.1px;left:1170.90px;">Over</div>
<div style="position:absolute;top:48.38px;font-size:13.5px;line-height:15.5115px;color:#353433;font-weight:normal;white-space:nowrap;left:1232.00px;">Projects by PM</div>
<div style="position:absolute;left:1306.80px;top:83.80px;width:88.89px;height:16.00px;background:#034f6e"></div>
<div style="position:absolute;top:86.35px;font-size:10px;line-height:11.49px;color:#605e5c;font-weight:normal;white-space:nowrap;right:134.30px;text-align:right;">Jorge Cortez</div>
<div style="position:absolute;top:88.25px;font-size:10px;line-height:11.49px;color:#605e5c;font-weight:normal;white-space:nowrap;left:1402.69px;">21</div>
<div style="position:absolute;left:1306.80px;top:104.08px;width:76.19px;height:16.00px;background:#034f6e"></div>
<div style="position:absolute;top:106.63px;font-size:10px;line-height:11.49px;color:#605e5c;font-weight:normal;white-space:nowrap;right:134.30px;text-align:right;">Jim Green</div>
<div style="position:absolute;top:108.53px;font-size:10px;line-height:11.49px;color:#605e5c;font-weight:normal;white-space:nowrap;left:1389.99px;">18</div>
<div style="position:absolute;left:1306.80px;top:124.36px;width:55.03px;height:16.00px;background:#034f6e"></div>
<div style="position:absolute;top:126.91px;font-size:10px;line-height:11.49px;color:#605e5c;font-weight:normal;white-space:nowrap;right:134.30px;text-align:right;">Earl Evander</div>
<div style="position:absolute;top:128.81px;font-size:10px;line-height:11.49px;color:#605e5c;font-weight:normal;white-space:nowrap;left:1368.83px;">13</div>
<div style="position:absolute;left:1306.80px;top:144.64px;width:38.10px;height:16.00px;background:#034f6e"></div>
<div style="position:absolute;top:147.19px;font-size:10px;line-height:11.49px;color:#605e5c;font-weight:normal;white-space:nowrap;right:134.30px;text-align:right;">Angel Tejada</div>
<div style="position:absolute;top:149.09px;font-size:10px;line-height:11.49px;color:#605e5c;font-weight:normal;white-space:nowrap;left:1351.90px;">9</div>
<div style="position:absolute;left:1306.80px;top:164.92px;width:16.93px;height:16.00px;background:#034f6e"></div>
<div style="position:absolute;top:167.47px;font-size:10px;line-height:11.49px;color:#605e5c;font-weight:normal;white-space:nowrap;right:134.30px;text-align:right;">Chris Carroll</div>
<div style="position:absolute;top:169.37px;font-size:10px;line-height:11.49px;color:#605e5c;font-weight:normal;white-space:nowrap;left:1330.73px;">4</div>
<div style="position:absolute;left:1306.80px;top:185.20px;width:4.23px;height:16.00px;background:#034f6e"></div>
<div style="position:absolute;top:187.75px;font-size:10px;line-height:11.49px;color:#605e5c;font-weight:normal;white-space:nowrap;right:134.30px;text-align:right;">Bob Beagle</div>
<div style="position:absolute;top:189.65px;font-size:10px;line-height:11.49px;color:#605e5c;font-weight:normal;white-space:nowrap;left:1318.03px;">1</div>
<div style="position:absolute;left:1306.80px;top:205.48px;width:4.23px;height:16.00px;background:#034f6e"></div>
<div style="position:absolute;top:208.03px;font-size:10px;line-height:11.49px;color:#605e5c;font-weight:normal;white-space:nowrap;right:134.30px;text-align:right;">Bob Thomas</div>
<div style="position:absolute;top:209.93px;font-size:10px;line-height:11.49px;color:#605e5c;font-weight:normal;white-space:nowrap;left:1318.03px;">1</div>
<div style="position:absolute;left:1306.80px;top:225.76px;width:4.23px;height:16.00px;background:#034f6e"></div>
<div style="position:absolute;top:228.31px;font-size:10px;line-height:11.49px;color:#605e5c;font-weight:normal;white-space:nowrap;right:134.30px;text-align:right;">Chris Pell</div>
<div style="position:absolute;top:230.21px;font-size:10px;line-height:11.49px;color:#605e5c;font-weight:normal;white-space:nowrap;left:1318.03px;">1</div>
<div style="position:absolute;left:1306.80px;top:246.04px;width:4.23px;height:16.00px;background:#034f6e"></div>
<div style="position:absolute;top:248.59px;font-size:10px;line-height:11.49px;color:#605e5c;font-weight:normal;white-space:nowrap;right:134.30px;text-align:right;">Harry Epstein</div>
<div style="position:absolute;top:250.49px;font-size:10px;line-height:11.49px;color:#605e5c;font-weight:normal;white-space:nowrap;left:1318.03px;">1</div>
<div style="position:absolute;left:1306.80px;top:266.32px;width:4.23px;height:16.00px;background:#034f6e"></div>
<div style="position:absolute;top:268.87px;font-size:10px;line-height:11.49px;color:#605e5c;font-weight:normal;white-space:nowrap;right:134.30px;text-align:right;">John Moyer</div>
<div style="position:absolute;top:270.77px;font-size:10px;line-height:11.49px;color:#605e5c;font-weight:normal;white-space:nowrap;left:1318.03px;">1</div>
<div style="position:absolute;left:1306.80px;top:286.60px;width:4.23px;height:16.00px;background:#034f6e"></div>
<div style="position:absolute;top:289.15px;font-size:10px;line-height:11.49px;color:#605e5c;font-weight:normal;white-space:nowrap;right:134.30px;text-align:right;">Tom Chen</div>
<div style="position:absolute;top:291.05px;font-size:10px;line-height:11.49px;color:#605e5c;font-weight:normal;white-space:nowrap;left:1318.03px;">1</div>
<div style="position:absolute;top:327.20px;font-size:13.7px;line-height:15.741299999999999px;color:#353433;font-weight:normal;white-space:nowrap;left:1028.10px;">Labor Hours by Drilling Team</div>
<div style="position:absolute;left:1074.80px;top:356.00px;width:63.20px;height:15.20px;background:#c4c4c4"></div>
<div style="position:absolute;left:1138.00px;top:356.00px;width:63.30px;height:15.20px;background:#d3d3d3"></div>
<div style="position:absolute;left:1201.30px;top:356.00px;width:63.30px;height:15.20px;background:#d8d8d8"></div>
<div style="position:absolute;left:1264.60px;top:356.00px;width:63.40px;height:15.20px;background:#efefef"></div>
<div style="position:absolute;left:1328.00px;top:356.00px;width:63.30px;height:15.20px;background:#efefef"></div>
<div style="position:absolute;left:1074.80px;top:359.20px;width:299.65px;height:9.00px;background:#034f6e"></div>
<div style="position:absolute;left:1391.18px;top:357.50px;width:2.00px;height:12.00px;background:#555555"></div>
<div style="position:absolute;top:359.32px;font-size:10.7px;line-height:12.2943px;color:#444444;font-weight:normal;white-space:nowrap;letter-spacing:0.2px;right:367.30px;text-align:right;">North</div>
<div style="position:absolute;top:358.90px;font-size:9.5px;line-height:10.9155px;color:#ffffff;font-weight:bold;white-space:nowrap;letter-spacing:-0.1px;right:69.55px;text-align:right;">64.58K</div>
<div style="position:absolute;left:1074.80px;top:372.50px;width:63.20px;height:15.20px;background:#c8c8c8"></div>
<div style="position:absolute;left:1138.00px;top:372.50px;width:63.30px;height:15.20px;background:#d6d6d6"></div>
<div style="position:absolute;left:1201.30px;top:372.50px;width:63.30px;height:15.20px;background:#eeeeee"></div>
<div style="position:absolute;left:1264.60px;top:372.50px;width:63.40px;height:15.20px;background:#eeeeee"></div>
<div style="position:absolute;left:1328.00px;top:372.50px;width:63.30px;height:15.20px;background:#f0f0f0"></div>
<div style="position:absolute;left:1074.80px;top:375.70px;width:215.99px;height:9.00px;background:#034f6e"></div>
<div style="position:absolute;left:1289.56px;top:374.00px;width:2.00px;height:12.00px;background:#555555"></div>
<div style="position:absolute;top:375.82px;font-size:10.7px;line-height:12.2943px;color:#444444;font-weight:normal;white-space:nowrap;letter-spacing:0.2px;right:367.30px;text-align:right;">East</div>
<div style="position:absolute;top:375.40px;font-size:9.5px;line-height:10.9155px;color:#333333;font-weight:normal;white-space:nowrap;letter-spacing:-0.1px;left:1296.79px;">46.55K</div>
<div style="position:absolute;left:1074.80px;top:389.00px;width:63.20px;height:15.20px;background:#c8c8c8"></div>
<div style="position:absolute;left:1138.00px;top:389.00px;width:63.30px;height:15.20px;background:#d6d6d6"></div>
<div style="position:absolute;left:1201.30px;top:389.00px;width:63.30px;height:15.20px;background:#e4e4e4"></div>
<div style="position:absolute;left:1264.60px;top:389.00px;width:63.40px;height:15.20px;background:#ebebeb"></div>
<div style="position:absolute;left:1328.00px;top:389.00px;width:63.30px;height:15.20px;background:#f0f0f0"></div>
<div style="position:absolute;left:1074.80px;top:392.20px;width:192.14px;height:9.00px;background:#034f6e"></div>
<div style="position:absolute;left:1280.74px;top:390.50px;width:2.00px;height:12.00px;background:#555555"></div>
<div style="position:absolute;top:392.32px;font-size:10.7px;line-height:12.2943px;color:#444444;font-weight:normal;white-space:nowrap;letter-spacing:0.2px;right:367.30px;text-align:right;">Central</div>
<div style="position:absolute;top:391.90px;font-size:9.5px;line-height:10.9155px;color:#333333;font-weight:normal;white-space:nowrap;letter-spacing:-0.1px;left:1272.94px;">41.41K</div>
<div style="position:absolute;left:1074.80px;top:405.50px;width:63.20px;height:15.20px;background:#c8c8c8"></div>
<div style="position:absolute;left:1138.00px;top:405.50px;width:63.30px;height:15.20px;background:#d4d4d4"></div>
<div style="position:absolute;left:1201.30px;top:405.50px;width:63.30px;height:15.20px;background:#dadada"></div>
<div style="position:absolute;left:1264.60px;top:405.50px;width:63.40px;height:15.20px;background:#efefef"></div>
<div style="position:absolute;left:1328.00px;top:405.50px;width:63.30px;height:15.20px;background:#efefef"></div>
<div style="position:absolute;left:1074.80px;top:408.70px;width:105.51px;height:9.00px;background:#034f6e"></div>
<div style="position:absolute;left:1182.84px;top:407.00px;width:2.00px;height:12.00px;background:#555555"></div>
<div style="position:absolute;top:408.82px;font-size:10.7px;line-height:12.2943px;color:#444444;font-weight:normal;white-space:nowrap;letter-spacing:0.2px;right:367.30px;text-align:right;">South</div>
<div style="position:absolute;top:408.40px;font-size:9.5px;line-height:10.9155px;color:#333333;font-weight:normal;white-space:nowrap;letter-spacing:-0.1px;left:1186.31px;">22.74K</div>
<div style="position:absolute;left:1074.80px;top:421.00px;width:1.00px;height:10.00px;background:#e8e8e8"></div>
<div style="position:absolute;top:431.25px;font-size:10px;line-height:11.49px;color:#605e5c;font-weight:normal;white-space:nowrap;left:1074.80px;width:0;display:flex;justify-content:center;">0K</div>
<div style="position:absolute;left:1167.60px;top:421.00px;width:1.00px;height:10.00px;background:#e8e8e8"></div>
<div style="position:absolute;top:431.25px;font-size:10px;line-height:11.49px;color:#605e5c;font-weight:normal;white-space:nowrap;left:1167.60px;width:0;display:flex;justify-content:center;">20K</div>
<div style="position:absolute;left:1260.40px;top:421.00px;width:1.00px;height:10.00px;background:#e8e8e8"></div>
<div style="position:absolute;top:431.25px;font-size:10px;line-height:11.49px;color:#605e5c;font-weight:normal;white-space:nowrap;left:1260.40px;width:0;display:flex;justify-content:center;">40K</div>
<div style="position:absolute;left:1353.20px;top:421.00px;width:1.00px;height:10.00px;background:#e8e8e8"></div>
<div style="position:absolute;top:431.25px;font-size:10px;line-height:11.49px;color:#605e5c;font-weight:normal;white-space:nowrap;left:1353.20px;width:0;display:flex;justify-content:center;">60K</div>
<div style="position:absolute;top:466.00px;font-size:13.7px;line-height:15.741299999999999px;color:#353433;font-weight:normal;white-space:nowrap;left:1027.90px;">Budgeted Hour Status by Team/Project</div>
<div style="position:absolute;left:1071.60px;top:512.00px;width:326.71px;height:11.40px;background:#034f6e"></div>
<div style="position:absolute;top:514.15px;font-size:10px;line-height:11.49px;color:#605e5c;font-weight:normal;white-space:nowrap;left:1405.81px;">37</div>
<div style="position:absolute;left:1071.60px;top:523.70px;width:8.83px;height:11.40px;background:#ec7a23"></div>
<div style="position:absolute;top:525.85px;font-size:10px;line-height:11.49px;color:#605e5c;font-weight:normal;white-space:nowrap;left:1087.93px;">1</div>
<div style="position:absolute;left:1071.60px;top:535.40px;width:26.49px;height:11.40px;background:#8dc63f"></div>
<div style="position:absolute;top:537.55px;font-size:10px;line-height:11.49px;color:#605e5c;font-weight:normal;white-space:nowrap;left:1105.59px;">3</div>
<div style="position:absolute;top:524.00px;font-size:10.5px;line-height:12.0645px;color:#605e5c;font-weight:normal;white-space:nowrap;right:369.70px;text-align:right;">North</div>
<div style="position:absolute;left:1071.60px;top:557.55px;width:61.81px;height:11.40px;background:#034f6e"></div>
<div style="position:absolute;top:559.70px;font-size:10px;line-height:11.49px;color:#605e5c;font-weight:normal;white-space:nowrap;left:1140.91px;">7</div>
<div style="position:absolute;left:1071.60px;top:569.25px;width:8.83px;height:11.40px;background:#ec7a23"></div>
<div style="position:absolute;top:571.40px;font-size:10px;line-height:11.49px;color:#605e5c;font-weight:normal;white-space:nowrap;left:1087.93px;">1</div>
<div style="position:absolute;left:1071.60px;top:580.95px;width:44.15px;height:11.40px;background:#8dc63f"></div>
<div style="position:absolute;top:583.10px;font-size:10px;line-height:11.49px;color:#605e5c;font-weight:normal;white-space:nowrap;left:1123.25px;">5</div>
<div style="position:absolute;top:569.55px;font-size:10.5px;line-height:12.0645px;color:#605e5c;font-weight:normal;white-space:nowrap;right:369.70px;text-align:right;">Central</div>
<div style="position:absolute;left:1071.60px;top:603.10px;width:61.81px;height:11.40px;background:#034f6e"></div>
<div style="position:absolute;top:605.25px;font-size:10px;line-height:11.49px;color:#605e5c;font-weight:normal;white-space:nowrap;left:1140.91px;">7</div>
<div style="position:absolute;left:1071.60px;top:626.50px;width:17.66px;height:11.40px;background:#8dc63f"></div>
<div style="position:absolute;top:628.65px;font-size:10px;line-height:11.49px;color:#605e5c;font-weight:normal;white-space:nowrap;left:1096.76px;">2</div>
<div style="position:absolute;top:615.10px;font-size:10.5px;line-height:12.0645px;color:#605e5c;font-weight:normal;white-space:nowrap;right:369.70px;text-align:right;">South</div>
<div style="position:absolute;left:1071.60px;top:648.65px;width:61.81px;height:11.40px;background:#034f6e"></div>
<div style="position:absolute;top:650.80px;font-size:10px;line-height:11.49px;color:#605e5c;font-weight:normal;white-space:nowrap;left:1140.91px;">7</div>
<div style="position:absolute;left:1071.60px;top:672.05px;width:8.83px;height:11.40px;background:#8dc63f"></div>
<div style="position:absolute;top:674.20px;font-size:10px;line-height:11.49px;color:#605e5c;font-weight:normal;white-space:nowrap;left:1087.93px;">1</div>
<div style="position:absolute;top:660.65px;font-size:10.5px;line-height:12.0645px;color:#605e5c;font-weight:normal;white-space:nowrap;right:369.70px;text-align:right;">East</div>
<div style="position:absolute;left:1103.50px;top:712.00px;width:8.6px;height:8.6px;border-radius:50%;background:#034f6e"></div>
<div style="position:absolute;top:710.79px;font-size:11.5px;line-height:13.2135px;color:#605e5c;font-weight:normal;white-space:nowrap;letter-spacing:-0.1px;left:1114.40px;">On Budget</div>
<div style="position:absolute;left:1174.50px;top:712.00px;width:8.6px;height:8.6px;border-radius:50%;background:#ec7a23"></div>
<div style="position:absolute;top:710.79px;font-size:11.5px;line-height:13.2135px;color:#605e5c;font-weight:normal;white-space:nowrap;letter-spacing:-0.1px;left:1185.40px;">Over Budget</div>
<div style="position:absolute;left:1255.20px;top:712.00px;width:8.6px;height:8.6px;border-radius:50%;background:#8dc63f"></div>
<div style="position:absolute;top:710.79px;font-size:11.5px;line-height:13.2135px;color:#605e5c;font-weight:normal;white-space:nowrap;letter-spacing:-0.1px;left:1265.70px;">Under Budget</div>
</div></body></html>
